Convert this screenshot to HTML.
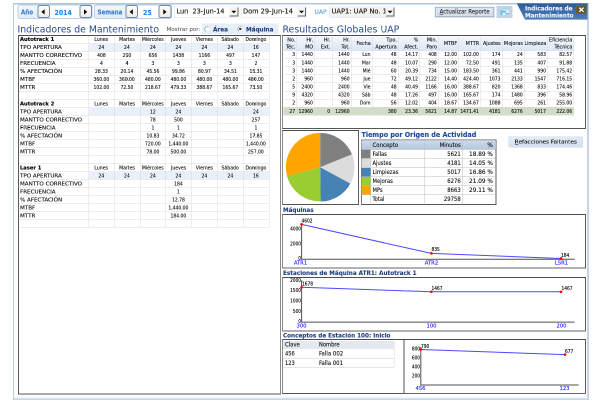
<!DOCTYPE html>
<html><head><meta charset="utf-8"><title>Indicadores de Mantenimiento</title>
<style>
html,body{margin:0;padding:0;background:#fff;width:600px;height:400px;overflow:hidden}
#r{position:absolute;left:0;top:0;width:1200px;height:800px;transform:scale(.5);transform-origin:0 0;font-family:'DejaVu Sans Condensed','DejaVu Sans','Liberation Sans',sans-serif;will-change:transform;-webkit-font-smoothing:antialiased;}
#r div{position:absolute;box-sizing:border-box}
#r svg{position:absolute;overflow:visible}
</style></head><body><div id="r">
<div  style="left:26.00px;top:6.40px;width:2.00px;height:794.00px;background:#b5cde5"></div>
<div  style="left:26.00px;top:6.40px;width:1152.00px;height:2.40px;background:#b0c6de"></div>
<div  style="left:28.00px;top:792.00px;width:1148.00px;height:8.00px;background:linear-gradient(#ffffff 0%,#eef4fa 55%,#c8d8e8 62%,#c8d8e8 100%)"></div>
<div  style="left:1174.00px;top:8.00px;width:4.40px;height:792.00px;background:#c6d4e3"></div>
<div  style="left:34.60px;top:8.60px;width:150.80px;height:29.80px;border:2px solid #bcd0e5;border-radius:5px;background:linear-gradient(#f2f7fc,#e4eef8)"></div>
<div  style="left:98.60px;top:10.60px;width:60.00px;height:25.80px;background:#fff"></div>
<div style="left:42.40px;top:16.40px;font-size:13.80px;line-height:17.25px;color:#3a7bd0;font-weight:bold;white-space:nowrap;-webkit-text-stroke:0.22px currentColor;transform:scaleX(0.890);transform-origin:0 0;">Año</div>
<div style="left:109.00px;top:17.20px;font-size:13.80px;line-height:17.25px;color:#2084ee;font-weight:bold;white-space:nowrap;-webkit-text-stroke:0.22px currentColor;">2014</div>
<div  style="left:74.80px;top:10.40px;width:25.20px;height:26.00px;border:2.4px solid #6c8aae;border-radius:4.5px;background:linear-gradient(#fdfcfa,#efece4)"></div>
<svg style="left:0;top:0" width="10" height="10"><polygon points="89.19999999999999,18.6 89.19999999999999,29.0 82.8,23.8" fill="#000"/></svg>
<div  style="left:158.80px;top:10.40px;width:25.20px;height:26.00px;border:2.4px solid #6c8aae;border-radius:4.5px;background:linear-gradient(#fdfcfa,#efece4)"></div>
<svg style="left:0;top:0" width="10" height="10"><polygon points="168.0,18.6 168.0,29.0 174.4,23.8" fill="#000"/></svg>
<div  style="left:188.40px;top:8.60px;width:155.20px;height:29.80px;border:2px solid #bcd0e5;border-radius:5px;background:linear-gradient(#f2f7fc,#e4eef8)"></div>
<div  style="left:275.00px;top:10.60px;width:42.20px;height:25.80px;background:#fff"></div>
<div style="left:195.40px;top:16.40px;font-size:13.80px;line-height:17.25px;color:#3a7bd0;font-weight:bold;white-space:nowrap;-webkit-text-stroke:0.22px currentColor;transform:scaleX(0.890);transform-origin:0 0;">Semana</div>
<div style="left:286.00px;top:17.20px;font-size:13.80px;line-height:17.25px;color:#2084ee;font-weight:bold;white-space:nowrap;-webkit-text-stroke:0.22px currentColor;">25</div>
<div  style="left:251.20px;top:10.40px;width:25.20px;height:26.00px;border:2.4px solid #6c8aae;border-radius:4.5px;background:linear-gradient(#fdfcfa,#efece4)"></div>
<svg style="left:0;top:0" width="10" height="10"><polygon points="265.6,18.6 265.6,29.0 259.2,23.8" fill="#000"/></svg>
<div  style="left:317.40px;top:10.40px;width:25.20px;height:26.00px;border:2.4px solid #6c8aae;border-radius:4.5px;background:linear-gradient(#fdfcfa,#efece4)"></div>
<svg style="left:0;top:0" width="10" height="10"><polygon points="326.59999999999997,18.6 326.59999999999997,29.0 333.0,23.8" fill="#000"/></svg>
<div  style="left:347.60px;top:13.20px;width:129.60px;height:22.40px;border:1px solid #dfe5ec;background:#fff"></div>
<div style="left:353.40px;top:15.18px;font-size:13.20px;line-height:16.50px;color:#111;font-weight:normal;white-space:nowrap;-webkit-text-stroke:0.22px currentColor;transform:scaleX(1.103);transform-origin:0 0;">Lun&nbsp; 23-Jun-14</div>
<div  style="left:458.40px;top:14.20px;width:18.20px;height:18.80px;border:2px solid #f8f8f5;border-right-color:#666;border-bottom-color:#666;background:#f5f4ef"></div>
<svg style="left:0;top:0" width="10" height="10"><polygon points="462.6,21.4 472.6,21.4 467.6,26.6" fill="#000"/></svg>
<div  style="left:481.60px;top:13.20px;width:131.20px;height:22.40px;border:1px solid #dfe5ec;background:#fff"></div>
<div style="left:486.40px;top:15.18px;font-size:13.20px;line-height:16.50px;color:#111;font-weight:normal;white-space:nowrap;-webkit-text-stroke:0.22px currentColor;transform:scaleX(1.113);transform-origin:0 0;">Dom 29-Jun-14</div>
<div  style="left:594.00px;top:14.20px;width:18.20px;height:18.80px;border:2px solid #f8f8f5;border-right-color:#666;border-bottom-color:#666;background:#f5f4ef"></div>
<svg style="left:0;top:0" width="10" height="10"><polygon points="598.2,21.4 608.2,21.4 603.2,26.6" fill="#000"/></svg>
<div style="left:629.40px;top:16.93px;font-size:11.40px;line-height:14.25px;color:#5596d6;font-weight:normal;white-space:nowrap;-webkit-text-stroke:0.1px currentColor;transform:scaleX(1.170);transform-origin:0 0;">UAP</div>
<div  style="left:658.00px;top:13.20px;width:131.20px;height:22.40px;border:1px solid #e3e6ea;background:#f3f3f1"></div>
<div style="left:662.80px;top:15.18px;font-size:13.20px;line-height:16.50px;color:#111;font-weight:normal;white-space:nowrap;-webkit-text-stroke:0.22px currentColor;transform:scaleX(1.130);transform-origin:0 0;">UAP1: UAP No. 1</div>
<div  style="left:770.80px;top:14.20px;width:18.20px;height:18.80px;border:2px solid #f8f8f5;border-right-color:#666;border-bottom-color:#666;background:#f5f4ef"></div>
<svg style="left:0;top:0" width="10" height="10"><polygon points="775.0,21.4 785.0,21.4 780.0,26.6" fill="#000"/></svg>
<div  style="left:869.20px;top:12.80px;width:120.40px;height:22.80px;background:#dce6f1;border-radius:1px"></div>
<div  style="left:871.20px;top:14.40px;width:116.40px;height:19.60px;border:1.5px solid #7f93aa;background:linear-gradient(#e0e8f2,#d3deeb)"></div>
<div style="left:871.20px;top:16.35px;font-size:12.20px;line-height:15.25px;color:#111;font-weight:normal;white-space:nowrap;-webkit-text-stroke:0.1px currentColor;width:116.40px;text-align:center;transform:scaleX(0.990);transform-origin:50% 0;"><u>A</u>ctualizar Reporte</div>
<div  style="left:992.60px;top:12.00px;width:32.60px;height:24.00px;background:#c4d3e4"></div>
<div  style="left:1006.40px;top:16.40px;width:11.20px;height:10.80px;background:linear-gradient(#9ad8f2 0%,#9ad8f2 25%,#e3ecf6 26%,#e3ecf6 100%);border-right:1.4px solid #7b8794;border-bottom:1.4px solid #7b8794"></div>
<div  style="left:1000.80px;top:20.80px;width:10.80px;height:9.60px;background:#5cc6ee"></div>
<div  style="left:1005.20px;top:24.80px;width:6.00px;height:5.00px;background:#eef3f8"></div>
<svg style="left:0;top:0" width="1200" height="60"><defs><linearGradient id="bg" x1="0" y1="0" x2="0" y2="1"><stop offset="0" stop-color="#2f5a9a"/><stop offset="1" stop-color="#4f7fba"/></linearGradient></defs><polygon points="1033.6,6.8 1175.2,6.8 1175.2,39.2 1050.0,39.2" fill="url(#bg)"/></svg>
<div style="left:1050.40px;top:9.75px;font-size:12.00px;line-height:15.00px;color:#eef3fc;font-weight:bold;white-space:nowrap;-webkit-text-stroke:0.22px currentColor;transform:scaleX(1.057);transform-origin:0 0;">Indicadores de</div>
<div style="left:1050.40px;top:23.75px;font-size:12.00px;line-height:15.00px;color:#eef3fc;font-weight:bold;white-space:nowrap;-webkit-text-stroke:0.22px currentColor;transform:scaleX(1.055);transform-origin:0 0;">Mantenimiento</div>
<div  style="left:1152.40px;top:11.20px;width:20.40px;height:16.40px;background:#5b5534;border:0.6px solid #77704a"></div>
<svg style="left:0;top:0" width="10" height="10"><path d="M1158.4 15.2 L1167.2 23.6 M1167.2 15.2 L1158.4 23.6" stroke="#fff" stroke-width="2.6" fill="none"/></svg>
<div style="left:35.20px;top:46.56px;font-size:19.40px;line-height:24.25px;color:#274b8f;font-weight:normal;white-space:nowrap;transform:scaleX(1.068);transform-origin:0 0;">Indicadores de Mantenimiento</div>
<div style="left:564.80px;top:46.76px;font-size:19.40px;line-height:24.25px;color:#274b8f;font-weight:normal;white-space:nowrap;transform:scaleX(1.076);transform-origin:0 0;">Resultados Globales UAP</div>
<div style="left:332.60px;top:51.92px;font-size:11.20px;line-height:14.00px;color:#505050;font-weight:normal;white-space:nowrap;-webkit-text-stroke:0.08px currentColor;transform:scaleX(1.096);transform-origin:0 0;">Mostrar por:</div>
<div  style="left:404.00px;top:46.80px;width:152.80px;height:21.00px;background:#e6eff9"></div>
<div  style="left:409.00px;top:52.60px;width:10.80px;height:10.80px;border:1.6px solid #707070;border-right-color:#e4e4e4;border-bottom-color:#e4e4e4;border-radius:50%;background:#fff;transform:rotate(-10deg)"></div>
<div style="left:426.40px;top:50.97px;font-size:12.80px;line-height:16.00px;color:#1f3f80;font-weight:bold;white-space:nowrap;-webkit-text-stroke:0.22px currentColor;transform:scaleX(0.994);transform-origin:0 0;">Área</div>
<div  style="left:475.20px;top:52.60px;width:10.80px;height:10.80px;border:1.6px solid #707070;border-right-color:#e4e4e4;border-bottom-color:#e4e4e4;border-radius:50%;background:#fff;transform:rotate(-10deg)"></div>
<div  style="left:478.40px;top:55.80px;width:4.40px;height:4.40px;border-radius:50%;background:#222"></div>
<div style="left:492.40px;top:50.97px;font-size:12.80px;line-height:16.00px;color:#1f3f80;font-weight:bold;white-space:nowrap;-webkit-text-stroke:0.22px currentColor;transform:scaleX(0.986);transform-origin:0 0;">Máquina</div>
<div  style="left:35.80px;top:70.00px;width:526.60px;height:718.60px;border-style:solid;border-width:2.0px;border-color:#4d4d4d #8a8a8a #555 #5a5a5a;background:#fff"></div>
<div style="left:40.00px;top:72.10px;font-size:10.30px;line-height:12.88px;color:#000;font-weight:bold;white-space:nowrap;-webkit-text-stroke:0.22px currentColor;transform:scaleX(1.120);transform-origin:0 0;">Autotrack 1</div>
<div style="left:176.60px;top:72.10px;font-size:10.30px;line-height:12.88px;color:#111;font-weight:normal;white-space:nowrap;-webkit-text-stroke:0.22px currentColor;width:51.58px;text-align:center;">Lunes</div>
<div style="left:228.18px;top:72.10px;font-size:10.30px;line-height:12.88px;color:#111;font-weight:normal;white-space:nowrap;-webkit-text-stroke:0.22px currentColor;width:51.58px;text-align:center;">Martes</div>
<div style="left:279.76px;top:72.10px;font-size:10.30px;line-height:12.88px;color:#111;font-weight:normal;white-space:nowrap;-webkit-text-stroke:0.22px currentColor;width:51.58px;text-align:center;">Miércoles</div>
<div style="left:331.34px;top:72.10px;font-size:10.30px;line-height:12.88px;color:#111;font-weight:normal;white-space:nowrap;-webkit-text-stroke:0.22px currentColor;width:51.58px;text-align:center;">Jueves</div>
<div style="left:382.92px;top:72.10px;font-size:10.30px;line-height:12.88px;color:#111;font-weight:normal;white-space:nowrap;-webkit-text-stroke:0.22px currentColor;width:51.58px;text-align:center;">Viernes</div>
<div style="left:434.50px;top:72.10px;font-size:10.30px;line-height:12.88px;color:#111;font-weight:normal;white-space:nowrap;-webkit-text-stroke:0.22px currentColor;width:51.58px;text-align:center;">Sábado</div>
<div style="left:486.08px;top:72.10px;font-size:10.30px;line-height:12.88px;color:#111;font-weight:normal;white-space:nowrap;-webkit-text-stroke:0.22px currentColor;width:51.58px;text-align:center;">Domingo</div>
<div  style="left:176.60px;top:86.50px;width:361.06px;height:15.80px;background:#e8f0fa"></div>
<div style="left:39.80px;top:88.10px;font-size:10.30px;line-height:12.88px;color:#111;font-weight:normal;white-space:nowrap;-webkit-text-stroke:0.22px currentColor;transform:scaleX(1.200);transform-origin:0 0;">TPO APERTURA</div>
<div style="left:176.60px;top:88.10px;font-size:10.30px;line-height:12.88px;color:#111;font-weight:normal;white-space:nowrap;-webkit-text-stroke:0.22px currentColor;width:51.58px;text-align:center;transform:scaleX(0.970);transform-origin:50% 0;">24</div>
<div style="left:228.18px;top:88.10px;font-size:10.30px;line-height:12.88px;color:#111;font-weight:normal;white-space:nowrap;-webkit-text-stroke:0.22px currentColor;width:51.58px;text-align:center;transform:scaleX(0.970);transform-origin:50% 0;">24</div>
<div style="left:279.76px;top:88.10px;font-size:10.30px;line-height:12.88px;color:#111;font-weight:normal;white-space:nowrap;-webkit-text-stroke:0.22px currentColor;width:51.58px;text-align:center;transform:scaleX(0.970);transform-origin:50% 0;">24</div>
<div style="left:331.34px;top:88.10px;font-size:10.30px;line-height:12.88px;color:#111;font-weight:normal;white-space:nowrap;-webkit-text-stroke:0.22px currentColor;width:51.58px;text-align:center;transform:scaleX(0.970);transform-origin:50% 0;">24</div>
<div style="left:382.92px;top:88.10px;font-size:10.30px;line-height:12.88px;color:#111;font-weight:normal;white-space:nowrap;-webkit-text-stroke:0.22px currentColor;width:51.58px;text-align:center;transform:scaleX(0.970);transform-origin:50% 0;">24</div>
<div style="left:434.50px;top:88.10px;font-size:10.30px;line-height:12.88px;color:#111;font-weight:normal;white-space:nowrap;-webkit-text-stroke:0.22px currentColor;width:51.58px;text-align:center;transform:scaleX(0.970);transform-origin:50% 0;">24</div>
<div style="left:486.08px;top:88.10px;font-size:10.30px;line-height:12.88px;color:#111;font-weight:normal;white-space:nowrap;-webkit-text-stroke:0.22px currentColor;width:51.58px;text-align:center;transform:scaleX(0.970);transform-origin:50% 0;">16</div>
<div style="left:39.80px;top:104.10px;font-size:10.30px;line-height:12.88px;color:#111;font-weight:normal;white-space:nowrap;-webkit-text-stroke:0.22px currentColor;transform:scaleX(1.200);transform-origin:0 0;">MANTTO CORRECTIVO</div>
<div style="left:176.60px;top:104.10px;font-size:10.30px;line-height:12.88px;color:#111;font-weight:normal;white-space:nowrap;-webkit-text-stroke:0.22px currentColor;width:51.58px;text-align:center;transform:scaleX(0.970);transform-origin:50% 0;">408</div>
<div style="left:228.18px;top:104.10px;font-size:10.30px;line-height:12.88px;color:#111;font-weight:normal;white-space:nowrap;-webkit-text-stroke:0.22px currentColor;width:51.58px;text-align:center;transform:scaleX(0.970);transform-origin:50% 0;">290</div>
<div style="left:279.76px;top:104.10px;font-size:10.30px;line-height:12.88px;color:#111;font-weight:normal;white-space:nowrap;-webkit-text-stroke:0.22px currentColor;width:51.58px;text-align:center;transform:scaleX(0.970);transform-origin:50% 0;">656</div>
<div style="left:331.34px;top:104.10px;font-size:10.30px;line-height:12.88px;color:#111;font-weight:normal;white-space:nowrap;-webkit-text-stroke:0.22px currentColor;width:51.58px;text-align:center;transform:scaleX(0.970);transform-origin:50% 0;">1438</div>
<div style="left:382.92px;top:104.10px;font-size:10.30px;line-height:12.88px;color:#111;font-weight:normal;white-space:nowrap;-webkit-text-stroke:0.22px currentColor;width:51.58px;text-align:center;transform:scaleX(0.970);transform-origin:50% 0;">1166</div>
<div style="left:434.50px;top:104.10px;font-size:10.30px;line-height:12.88px;color:#111;font-weight:normal;white-space:nowrap;-webkit-text-stroke:0.22px currentColor;width:51.58px;text-align:center;transform:scaleX(0.970);transform-origin:50% 0;">497</div>
<div style="left:486.08px;top:104.10px;font-size:10.30px;line-height:12.88px;color:#111;font-weight:normal;white-space:nowrap;-webkit-text-stroke:0.22px currentColor;width:51.58px;text-align:center;transform:scaleX(0.970);transform-origin:50% 0;">147</div>
<div style="left:39.80px;top:120.10px;font-size:10.30px;line-height:12.88px;color:#111;font-weight:normal;white-space:nowrap;-webkit-text-stroke:0.22px currentColor;transform:scaleX(1.200);transform-origin:0 0;">FRECUENCIA</div>
<div style="left:176.60px;top:120.10px;font-size:10.30px;line-height:12.88px;color:#111;font-weight:normal;white-space:nowrap;-webkit-text-stroke:0.22px currentColor;width:51.58px;text-align:center;transform:scaleX(0.970);transform-origin:50% 0;">4</div>
<div style="left:228.18px;top:120.10px;font-size:10.30px;line-height:12.88px;color:#111;font-weight:normal;white-space:nowrap;-webkit-text-stroke:0.22px currentColor;width:51.58px;text-align:center;transform:scaleX(0.970);transform-origin:50% 0;">4</div>
<div style="left:279.76px;top:120.10px;font-size:10.30px;line-height:12.88px;color:#111;font-weight:normal;white-space:nowrap;-webkit-text-stroke:0.22px currentColor;width:51.58px;text-align:center;transform:scaleX(0.970);transform-origin:50% 0;">3</div>
<div style="left:331.34px;top:120.10px;font-size:10.30px;line-height:12.88px;color:#111;font-weight:normal;white-space:nowrap;-webkit-text-stroke:0.22px currentColor;width:51.58px;text-align:center;transform:scaleX(0.970);transform-origin:50% 0;">3</div>
<div style="left:382.92px;top:120.10px;font-size:10.30px;line-height:12.88px;color:#111;font-weight:normal;white-space:nowrap;-webkit-text-stroke:0.22px currentColor;width:51.58px;text-align:center;transform:scaleX(0.970);transform-origin:50% 0;">3</div>
<div style="left:434.50px;top:120.10px;font-size:10.30px;line-height:12.88px;color:#111;font-weight:normal;white-space:nowrap;-webkit-text-stroke:0.22px currentColor;width:51.58px;text-align:center;transform:scaleX(0.970);transform-origin:50% 0;">3</div>
<div style="left:486.08px;top:120.10px;font-size:10.30px;line-height:12.88px;color:#111;font-weight:normal;white-space:nowrap;-webkit-text-stroke:0.22px currentColor;width:51.58px;text-align:center;transform:scaleX(0.970);transform-origin:50% 0;">2</div>
<div style="left:39.80px;top:136.10px;font-size:10.30px;line-height:12.88px;color:#111;font-weight:normal;white-space:nowrap;-webkit-text-stroke:0.22px currentColor;transform:scaleX(1.200);transform-origin:0 0;">% AFECTACIÓN</div>
<div style="left:176.60px;top:136.10px;font-size:10.30px;line-height:12.88px;color:#111;font-weight:normal;white-space:nowrap;-webkit-text-stroke:0.22px currentColor;width:51.58px;text-align:center;transform:scaleX(0.970);transform-origin:50% 0;">28.33</div>
<div style="left:228.18px;top:136.10px;font-size:10.30px;line-height:12.88px;color:#111;font-weight:normal;white-space:nowrap;-webkit-text-stroke:0.22px currentColor;width:51.58px;text-align:center;transform:scaleX(0.970);transform-origin:50% 0;">20.14</div>
<div style="left:279.76px;top:136.10px;font-size:10.30px;line-height:12.88px;color:#111;font-weight:normal;white-space:nowrap;-webkit-text-stroke:0.22px currentColor;width:51.58px;text-align:center;transform:scaleX(0.970);transform-origin:50% 0;">45.56</div>
<div style="left:331.34px;top:136.10px;font-size:10.30px;line-height:12.88px;color:#111;font-weight:normal;white-space:nowrap;-webkit-text-stroke:0.22px currentColor;width:51.58px;text-align:center;transform:scaleX(0.970);transform-origin:50% 0;">99.86</div>
<div style="left:382.92px;top:136.10px;font-size:10.30px;line-height:12.88px;color:#111;font-weight:normal;white-space:nowrap;-webkit-text-stroke:0.22px currentColor;width:51.58px;text-align:center;transform:scaleX(0.970);transform-origin:50% 0;">80.97</div>
<div style="left:434.50px;top:136.10px;font-size:10.30px;line-height:12.88px;color:#111;font-weight:normal;white-space:nowrap;-webkit-text-stroke:0.22px currentColor;width:51.58px;text-align:center;transform:scaleX(0.970);transform-origin:50% 0;">34.51</div>
<div style="left:486.08px;top:136.10px;font-size:10.30px;line-height:12.88px;color:#111;font-weight:normal;white-space:nowrap;-webkit-text-stroke:0.22px currentColor;width:51.58px;text-align:center;transform:scaleX(0.970);transform-origin:50% 0;">15.31</div>
<div style="left:39.80px;top:152.10px;font-size:10.30px;line-height:12.88px;color:#111;font-weight:normal;white-space:nowrap;-webkit-text-stroke:0.22px currentColor;transform:scaleX(1.200);transform-origin:0 0;">MTBF</div>
<div style="left:176.60px;top:152.10px;font-size:10.30px;line-height:12.88px;color:#111;font-weight:normal;white-space:nowrap;-webkit-text-stroke:0.22px currentColor;width:51.58px;text-align:center;transform:scaleX(0.970);transform-origin:50% 0;">360.00</div>
<div style="left:228.18px;top:152.10px;font-size:10.30px;line-height:12.88px;color:#111;font-weight:normal;white-space:nowrap;-webkit-text-stroke:0.22px currentColor;width:51.58px;text-align:center;transform:scaleX(0.970);transform-origin:50% 0;">360.00</div>
<div style="left:279.76px;top:152.10px;font-size:10.30px;line-height:12.88px;color:#111;font-weight:normal;white-space:nowrap;-webkit-text-stroke:0.22px currentColor;width:51.58px;text-align:center;transform:scaleX(0.970);transform-origin:50% 0;">480.00</div>
<div style="left:331.34px;top:152.10px;font-size:10.30px;line-height:12.88px;color:#111;font-weight:normal;white-space:nowrap;-webkit-text-stroke:0.22px currentColor;width:51.58px;text-align:center;transform:scaleX(0.970);transform-origin:50% 0;">480.00</div>
<div style="left:382.92px;top:152.10px;font-size:10.30px;line-height:12.88px;color:#111;font-weight:normal;white-space:nowrap;-webkit-text-stroke:0.22px currentColor;width:51.58px;text-align:center;transform:scaleX(0.970);transform-origin:50% 0;">480.00</div>
<div style="left:434.50px;top:152.10px;font-size:10.30px;line-height:12.88px;color:#111;font-weight:normal;white-space:nowrap;-webkit-text-stroke:0.22px currentColor;width:51.58px;text-align:center;transform:scaleX(0.970);transform-origin:50% 0;">480.00</div>
<div style="left:486.08px;top:152.10px;font-size:10.30px;line-height:12.88px;color:#111;font-weight:normal;white-space:nowrap;-webkit-text-stroke:0.22px currentColor;width:51.58px;text-align:center;transform:scaleX(0.970);transform-origin:50% 0;">480.00</div>
<div style="left:39.80px;top:168.10px;font-size:10.30px;line-height:12.88px;color:#111;font-weight:normal;white-space:nowrap;-webkit-text-stroke:0.22px currentColor;transform:scaleX(1.200);transform-origin:0 0;">MTTR</div>
<div style="left:176.60px;top:168.10px;font-size:10.30px;line-height:12.88px;color:#111;font-weight:normal;white-space:nowrap;-webkit-text-stroke:0.22px currentColor;width:51.58px;text-align:center;transform:scaleX(0.970);transform-origin:50% 0;">102.00</div>
<div style="left:228.18px;top:168.10px;font-size:10.30px;line-height:12.88px;color:#111;font-weight:normal;white-space:nowrap;-webkit-text-stroke:0.22px currentColor;width:51.58px;text-align:center;transform:scaleX(0.970);transform-origin:50% 0;">72.50</div>
<div style="left:279.76px;top:168.10px;font-size:10.30px;line-height:12.88px;color:#111;font-weight:normal;white-space:nowrap;-webkit-text-stroke:0.22px currentColor;width:51.58px;text-align:center;transform:scaleX(0.970);transform-origin:50% 0;">218.67</div>
<div style="left:331.34px;top:168.10px;font-size:10.30px;line-height:12.88px;color:#111;font-weight:normal;white-space:nowrap;-webkit-text-stroke:0.22px currentColor;width:51.58px;text-align:center;transform:scaleX(0.970);transform-origin:50% 0;">479.33</div>
<div style="left:382.92px;top:168.10px;font-size:10.30px;line-height:12.88px;color:#111;font-weight:normal;white-space:nowrap;-webkit-text-stroke:0.22px currentColor;width:51.58px;text-align:center;transform:scaleX(0.970);transform-origin:50% 0;">388.67</div>
<div style="left:434.50px;top:168.10px;font-size:10.30px;line-height:12.88px;color:#111;font-weight:normal;white-space:nowrap;-webkit-text-stroke:0.22px currentColor;width:51.58px;text-align:center;transform:scaleX(0.970);transform-origin:50% 0;">165.67</div>
<div style="left:486.08px;top:168.10px;font-size:10.30px;line-height:12.88px;color:#111;font-weight:normal;white-space:nowrap;-webkit-text-stroke:0.22px currentColor;width:51.58px;text-align:center;transform:scaleX(0.970);transform-origin:50% 0;">73.50</div>
<div style="left:40.00px;top:200.70px;font-size:10.30px;line-height:12.88px;color:#000;font-weight:bold;white-space:nowrap;-webkit-text-stroke:0.22px currentColor;transform:scaleX(1.120);transform-origin:0 0;">Autotrack 2</div>
<div style="left:176.60px;top:200.70px;font-size:10.30px;line-height:12.88px;color:#111;font-weight:normal;white-space:nowrap;-webkit-text-stroke:0.22px currentColor;width:51.58px;text-align:center;">Lunes</div>
<div style="left:228.18px;top:200.70px;font-size:10.30px;line-height:12.88px;color:#111;font-weight:normal;white-space:nowrap;-webkit-text-stroke:0.22px currentColor;width:51.58px;text-align:center;">Martes</div>
<div style="left:279.76px;top:200.70px;font-size:10.30px;line-height:12.88px;color:#111;font-weight:normal;white-space:nowrap;-webkit-text-stroke:0.22px currentColor;width:51.58px;text-align:center;">Miércoles</div>
<div style="left:331.34px;top:200.70px;font-size:10.30px;line-height:12.88px;color:#111;font-weight:normal;white-space:nowrap;-webkit-text-stroke:0.22px currentColor;width:51.58px;text-align:center;">Jueves</div>
<div style="left:382.92px;top:200.70px;font-size:10.30px;line-height:12.88px;color:#111;font-weight:normal;white-space:nowrap;-webkit-text-stroke:0.22px currentColor;width:51.58px;text-align:center;">Viernes</div>
<div style="left:434.50px;top:200.70px;font-size:10.30px;line-height:12.88px;color:#111;font-weight:normal;white-space:nowrap;-webkit-text-stroke:0.22px currentColor;width:51.58px;text-align:center;">Sábado</div>
<div style="left:486.08px;top:200.70px;font-size:10.30px;line-height:12.88px;color:#111;font-weight:normal;white-space:nowrap;-webkit-text-stroke:0.22px currentColor;width:51.58px;text-align:center;">Domingo</div>
<div  style="left:176.60px;top:214.50px;width:361.06px;height:15.80px;background:#e8f0fa"></div>
<div style="left:39.80px;top:216.70px;font-size:10.30px;line-height:12.88px;color:#111;font-weight:normal;white-space:nowrap;-webkit-text-stroke:0.22px currentColor;transform:scaleX(1.200);transform-origin:0 0;">TPO APERTURA</div>
<div style="left:279.76px;top:216.70px;font-size:10.30px;line-height:12.88px;color:#111;font-weight:normal;white-space:nowrap;-webkit-text-stroke:0.22px currentColor;width:51.58px;text-align:center;transform:scaleX(0.970);transform-origin:50% 0;">12</div>
<div style="left:331.34px;top:216.70px;font-size:10.30px;line-height:12.88px;color:#111;font-weight:normal;white-space:nowrap;-webkit-text-stroke:0.22px currentColor;width:51.58px;text-align:center;transform:scaleX(0.970);transform-origin:50% 0;">24</div>
<div style="left:486.08px;top:216.70px;font-size:10.30px;line-height:12.88px;color:#111;font-weight:normal;white-space:nowrap;-webkit-text-stroke:0.22px currentColor;width:51.58px;text-align:center;transform:scaleX(0.970);transform-origin:50% 0;">24</div>
<div style="left:39.80px;top:232.70px;font-size:10.30px;line-height:12.88px;color:#111;font-weight:normal;white-space:nowrap;-webkit-text-stroke:0.22px currentColor;transform:scaleX(1.200);transform-origin:0 0;">MANTTO CORRECTIVO</div>
<div style="left:279.76px;top:232.70px;font-size:10.30px;line-height:12.88px;color:#111;font-weight:normal;white-space:nowrap;-webkit-text-stroke:0.22px currentColor;width:51.58px;text-align:center;transform:scaleX(0.970);transform-origin:50% 0;">78</div>
<div style="left:331.34px;top:232.70px;font-size:10.30px;line-height:12.88px;color:#111;font-weight:normal;white-space:nowrap;-webkit-text-stroke:0.22px currentColor;width:51.58px;text-align:center;transform:scaleX(0.970);transform-origin:50% 0;">500</div>
<div style="left:486.08px;top:232.70px;font-size:10.30px;line-height:12.88px;color:#111;font-weight:normal;white-space:nowrap;-webkit-text-stroke:0.22px currentColor;width:51.58px;text-align:center;transform:scaleX(0.970);transform-origin:50% 0;">257</div>
<div style="left:39.80px;top:248.70px;font-size:10.30px;line-height:12.88px;color:#111;font-weight:normal;white-space:nowrap;-webkit-text-stroke:0.22px currentColor;transform:scaleX(1.200);transform-origin:0 0;">FRECUENCIA</div>
<div style="left:279.76px;top:248.70px;font-size:10.30px;line-height:12.88px;color:#111;font-weight:normal;white-space:nowrap;-webkit-text-stroke:0.22px currentColor;width:51.58px;text-align:center;transform:scaleX(0.970);transform-origin:50% 0;">1</div>
<div style="left:331.34px;top:248.70px;font-size:10.30px;line-height:12.88px;color:#111;font-weight:normal;white-space:nowrap;-webkit-text-stroke:0.22px currentColor;width:51.58px;text-align:center;transform:scaleX(0.970);transform-origin:50% 0;">1</div>
<div style="left:486.08px;top:248.70px;font-size:10.30px;line-height:12.88px;color:#111;font-weight:normal;white-space:nowrap;-webkit-text-stroke:0.22px currentColor;width:51.58px;text-align:center;transform:scaleX(0.970);transform-origin:50% 0;">1</div>
<div style="left:39.80px;top:264.70px;font-size:10.30px;line-height:12.88px;color:#111;font-weight:normal;white-space:nowrap;-webkit-text-stroke:0.22px currentColor;transform:scaleX(1.200);transform-origin:0 0;">% AFECTACIÓN</div>
<div style="left:279.76px;top:264.70px;font-size:10.30px;line-height:12.88px;color:#111;font-weight:normal;white-space:nowrap;-webkit-text-stroke:0.22px currentColor;width:51.58px;text-align:center;transform:scaleX(0.970);transform-origin:50% 0;">10.83</div>
<div style="left:331.34px;top:264.70px;font-size:10.30px;line-height:12.88px;color:#111;font-weight:normal;white-space:nowrap;-webkit-text-stroke:0.22px currentColor;width:51.58px;text-align:center;transform:scaleX(0.970);transform-origin:50% 0;">34.72</div>
<div style="left:486.08px;top:264.70px;font-size:10.30px;line-height:12.88px;color:#111;font-weight:normal;white-space:nowrap;-webkit-text-stroke:0.22px currentColor;width:51.58px;text-align:center;transform:scaleX(0.970);transform-origin:50% 0;">17.85</div>
<div style="left:39.80px;top:280.70px;font-size:10.30px;line-height:12.88px;color:#111;font-weight:normal;white-space:nowrap;-webkit-text-stroke:0.22px currentColor;transform:scaleX(1.200);transform-origin:0 0;">MTBF</div>
<div style="left:279.76px;top:280.70px;font-size:10.30px;line-height:12.88px;color:#111;font-weight:normal;white-space:nowrap;-webkit-text-stroke:0.22px currentColor;width:51.58px;text-align:center;transform:scaleX(0.970);transform-origin:50% 0;">720.00</div>
<div style="left:331.34px;top:280.70px;font-size:10.30px;line-height:12.88px;color:#111;font-weight:normal;white-space:nowrap;-webkit-text-stroke:0.22px currentColor;width:51.58px;text-align:center;transform:scaleX(0.970);transform-origin:50% 0;">1,440.00</div>
<div style="left:486.08px;top:280.70px;font-size:10.30px;line-height:12.88px;color:#111;font-weight:normal;white-space:nowrap;-webkit-text-stroke:0.22px currentColor;width:51.58px;text-align:center;transform:scaleX(0.970);transform-origin:50% 0;">1,440.00</div>
<div style="left:39.80px;top:296.70px;font-size:10.30px;line-height:12.88px;color:#111;font-weight:normal;white-space:nowrap;-webkit-text-stroke:0.22px currentColor;transform:scaleX(1.200);transform-origin:0 0;">MTTR</div>
<div style="left:279.76px;top:296.70px;font-size:10.30px;line-height:12.88px;color:#111;font-weight:normal;white-space:nowrap;-webkit-text-stroke:0.22px currentColor;width:51.58px;text-align:center;transform:scaleX(0.970);transform-origin:50% 0;">78.00</div>
<div style="left:331.34px;top:296.70px;font-size:10.30px;line-height:12.88px;color:#111;font-weight:normal;white-space:nowrap;-webkit-text-stroke:0.22px currentColor;width:51.58px;text-align:center;transform:scaleX(0.970);transform-origin:50% 0;">500.00</div>
<div style="left:486.08px;top:296.70px;font-size:10.30px;line-height:12.88px;color:#111;font-weight:normal;white-space:nowrap;-webkit-text-stroke:0.22px currentColor;width:51.58px;text-align:center;transform:scaleX(0.970);transform-origin:50% 0;">257.00</div>
<div style="left:40.00px;top:329.30px;font-size:10.30px;line-height:12.88px;color:#000;font-weight:bold;white-space:nowrap;-webkit-text-stroke:0.22px currentColor;transform:scaleX(1.120);transform-origin:0 0;">Laser 1</div>
<div style="left:176.60px;top:329.30px;font-size:10.30px;line-height:12.88px;color:#111;font-weight:normal;white-space:nowrap;-webkit-text-stroke:0.22px currentColor;width:51.58px;text-align:center;">Lunes</div>
<div style="left:228.18px;top:329.30px;font-size:10.30px;line-height:12.88px;color:#111;font-weight:normal;white-space:nowrap;-webkit-text-stroke:0.22px currentColor;width:51.58px;text-align:center;">Martes</div>
<div style="left:279.76px;top:329.30px;font-size:10.30px;line-height:12.88px;color:#111;font-weight:normal;white-space:nowrap;-webkit-text-stroke:0.22px currentColor;width:51.58px;text-align:center;">Miércoles</div>
<div style="left:331.34px;top:329.30px;font-size:10.30px;line-height:12.88px;color:#111;font-weight:normal;white-space:nowrap;-webkit-text-stroke:0.22px currentColor;width:51.58px;text-align:center;">Jueves</div>
<div style="left:382.92px;top:329.30px;font-size:10.30px;line-height:12.88px;color:#111;font-weight:normal;white-space:nowrap;-webkit-text-stroke:0.22px currentColor;width:51.58px;text-align:center;">Viernes</div>
<div style="left:434.50px;top:329.30px;font-size:10.30px;line-height:12.88px;color:#111;font-weight:normal;white-space:nowrap;-webkit-text-stroke:0.22px currentColor;width:51.58px;text-align:center;">Sábado</div>
<div style="left:486.08px;top:329.30px;font-size:10.30px;line-height:12.88px;color:#111;font-weight:normal;white-space:nowrap;-webkit-text-stroke:0.22px currentColor;width:51.58px;text-align:center;">Domingo</div>
<div  style="left:176.60px;top:342.50px;width:361.06px;height:15.80px;background:#e8f0fa"></div>
<div style="left:39.80px;top:345.30px;font-size:10.30px;line-height:12.88px;color:#111;font-weight:normal;white-space:nowrap;-webkit-text-stroke:0.22px currentColor;transform:scaleX(1.200);transform-origin:0 0;">TPO APERTURA</div>
<div style="left:176.60px;top:345.30px;font-size:10.30px;line-height:12.88px;color:#111;font-weight:normal;white-space:nowrap;-webkit-text-stroke:0.22px currentColor;width:51.58px;text-align:center;transform:scaleX(0.970);transform-origin:50% 0;">24</div>
<div style="left:228.18px;top:345.30px;font-size:10.30px;line-height:12.88px;color:#111;font-weight:normal;white-space:nowrap;-webkit-text-stroke:0.22px currentColor;width:51.58px;text-align:center;transform:scaleX(0.970);transform-origin:50% 0;">24</div>
<div style="left:279.76px;top:345.30px;font-size:10.30px;line-height:12.88px;color:#111;font-weight:normal;white-space:nowrap;-webkit-text-stroke:0.22px currentColor;width:51.58px;text-align:center;transform:scaleX(0.970);transform-origin:50% 0;">24</div>
<div style="left:331.34px;top:345.30px;font-size:10.30px;line-height:12.88px;color:#111;font-weight:normal;white-space:nowrap;-webkit-text-stroke:0.22px currentColor;width:51.58px;text-align:center;transform:scaleX(0.970);transform-origin:50% 0;">24</div>
<div style="left:382.92px;top:345.30px;font-size:10.30px;line-height:12.88px;color:#111;font-weight:normal;white-space:nowrap;-webkit-text-stroke:0.22px currentColor;width:51.58px;text-align:center;transform:scaleX(0.970);transform-origin:50% 0;">24</div>
<div style="left:434.50px;top:345.30px;font-size:10.30px;line-height:12.88px;color:#111;font-weight:normal;white-space:nowrap;-webkit-text-stroke:0.22px currentColor;width:51.58px;text-align:center;transform:scaleX(0.970);transform-origin:50% 0;">24</div>
<div style="left:486.08px;top:345.30px;font-size:10.30px;line-height:12.88px;color:#111;font-weight:normal;white-space:nowrap;-webkit-text-stroke:0.22px currentColor;width:51.58px;text-align:center;transform:scaleX(0.970);transform-origin:50% 0;">16</div>
<div style="left:39.80px;top:361.30px;font-size:10.30px;line-height:12.88px;color:#111;font-weight:normal;white-space:nowrap;-webkit-text-stroke:0.22px currentColor;transform:scaleX(1.200);transform-origin:0 0;">MANTTO CORRECTIVO</div>
<div style="left:331.34px;top:361.30px;font-size:10.30px;line-height:12.88px;color:#111;font-weight:normal;white-space:nowrap;-webkit-text-stroke:0.22px currentColor;width:51.58px;text-align:center;transform:scaleX(0.970);transform-origin:50% 0;">184</div>
<div style="left:39.80px;top:377.30px;font-size:10.30px;line-height:12.88px;color:#111;font-weight:normal;white-space:nowrap;-webkit-text-stroke:0.22px currentColor;transform:scaleX(1.200);transform-origin:0 0;">FRECUENCIA</div>
<div style="left:331.34px;top:377.30px;font-size:10.30px;line-height:12.88px;color:#111;font-weight:normal;white-space:nowrap;-webkit-text-stroke:0.22px currentColor;width:51.58px;text-align:center;transform:scaleX(0.970);transform-origin:50% 0;">1</div>
<div style="left:39.80px;top:393.30px;font-size:10.30px;line-height:12.88px;color:#111;font-weight:normal;white-space:nowrap;-webkit-text-stroke:0.22px currentColor;transform:scaleX(1.200);transform-origin:0 0;">% AFECTACIÓN</div>
<div style="left:331.34px;top:393.30px;font-size:10.30px;line-height:12.88px;color:#111;font-weight:normal;white-space:nowrap;-webkit-text-stroke:0.22px currentColor;width:51.58px;text-align:center;transform:scaleX(0.970);transform-origin:50% 0;">12.78</div>
<div style="left:39.80px;top:409.30px;font-size:10.30px;line-height:12.88px;color:#111;font-weight:normal;white-space:nowrap;-webkit-text-stroke:0.22px currentColor;transform:scaleX(1.200);transform-origin:0 0;">MTBF</div>
<div style="left:331.34px;top:409.30px;font-size:10.30px;line-height:12.88px;color:#111;font-weight:normal;white-space:nowrap;-webkit-text-stroke:0.22px currentColor;width:51.58px;text-align:center;transform:scaleX(0.970);transform-origin:50% 0;">1,440.00</div>
<div style="left:39.80px;top:425.30px;font-size:10.30px;line-height:12.88px;color:#111;font-weight:normal;white-space:nowrap;-webkit-text-stroke:0.22px currentColor;transform:scaleX(1.200);transform-origin:0 0;">MTTR</div>
<div style="left:331.34px;top:425.30px;font-size:10.30px;line-height:12.88px;color:#111;font-weight:normal;white-space:nowrap;-webkit-text-stroke:0.22px currentColor;width:51.58px;text-align:center;transform:scaleX(0.970);transform-origin:50% 0;">184.00</div>
<div style="left:37.60px;top:86.50px;width:500.66px;height:1.00px;background:#dcdcdc"></div>
<div style="left:37.60px;top:102.50px;width:500.66px;height:1.00px;background:#dcdcdc"></div>
<div style="left:37.60px;top:118.50px;width:500.66px;height:1.00px;background:#dcdcdc"></div>
<div style="left:37.60px;top:134.50px;width:500.66px;height:1.00px;background:#dcdcdc"></div>
<div style="left:37.60px;top:150.50px;width:500.66px;height:1.00px;background:#dcdcdc"></div>
<div style="left:37.60px;top:166.50px;width:500.66px;height:1.00px;background:#dcdcdc"></div>
<div style="left:37.60px;top:182.50px;width:500.66px;height:1.00px;background:#dcdcdc"></div>
<div style="left:37.60px;top:198.50px;width:500.66px;height:1.00px;background:#dcdcdc"></div>
<div style="left:37.60px;top:214.50px;width:500.66px;height:1.00px;background:#dcdcdc"></div>
<div style="left:37.60px;top:230.50px;width:500.66px;height:1.00px;background:#dcdcdc"></div>
<div style="left:37.60px;top:246.50px;width:500.66px;height:1.00px;background:#dcdcdc"></div>
<div style="left:37.60px;top:262.50px;width:500.66px;height:1.00px;background:#dcdcdc"></div>
<div style="left:37.60px;top:278.50px;width:500.66px;height:1.00px;background:#dcdcdc"></div>
<div style="left:37.60px;top:294.50px;width:500.66px;height:1.00px;background:#dcdcdc"></div>
<div style="left:37.60px;top:310.50px;width:500.66px;height:1.00px;background:#dcdcdc"></div>
<div style="left:37.60px;top:326.50px;width:500.66px;height:1.00px;background:#dcdcdc"></div>
<div style="left:37.60px;top:342.50px;width:500.66px;height:1.00px;background:#dcdcdc"></div>
<div style="left:37.60px;top:358.50px;width:500.66px;height:1.00px;background:#dcdcdc"></div>
<div style="left:37.60px;top:374.50px;width:500.66px;height:1.00px;background:#dcdcdc"></div>
<div style="left:37.60px;top:390.50px;width:500.66px;height:1.00px;background:#dcdcdc"></div>
<div style="left:37.60px;top:406.50px;width:500.66px;height:1.00px;background:#dcdcdc"></div>
<div style="left:37.60px;top:422.50px;width:500.66px;height:1.00px;background:#dcdcdc"></div>
<div style="left:37.60px;top:438.50px;width:500.66px;height:1.00px;background:#dcdcdc"></div>
<div style="left:37.60px;top:454.50px;width:500.66px;height:1.00px;background:#dcdcdc"></div>
<div style="left:176.60px;top:72.80px;width:1.00px;height:381.70px;background:#dcdcdc"></div>
<div style="left:228.18px;top:72.80px;width:1.00px;height:381.70px;background:#dcdcdc"></div>
<div style="left:279.76px;top:72.80px;width:1.00px;height:381.70px;background:#dcdcdc"></div>
<div style="left:331.34px;top:72.80px;width:1.00px;height:381.70px;background:#dcdcdc"></div>
<div style="left:382.92px;top:72.80px;width:1.00px;height:381.70px;background:#dcdcdc"></div>
<div style="left:434.50px;top:72.80px;width:1.00px;height:381.70px;background:#dcdcdc"></div>
<div style="left:486.08px;top:72.80px;width:1.00px;height:381.70px;background:#dcdcdc"></div>
<div style="left:537.66px;top:72.80px;width:1.00px;height:381.70px;background:#dcdcdc"></div>
<div  style="left:564.00px;top:70.00px;width:607.80px;height:187.50px;border-style:solid;border-width:2.0px;border-color:#4d4d4d #5a5a5a #555 #8a8a8a;background:#fff"></div>
<div  style="left:566.80px;top:72.80px;width:580.40px;height:27.80px;background:linear-gradient(#f3f7fc,#dde8f6)"></div>
<div style="left:566.80px;top:72.80px;font-size:10.30px;line-height:12.88px;color:#111;font-weight:normal;white-space:nowrap;-webkit-text-stroke:0.22px currentColor;width:23.60px;text-align:right;transform:scaleX(1.050);transform-origin:100% 0;">No.</div>
<div style="left:566.80px;top:86.60px;font-size:10.30px;line-height:12.88px;color:#111;font-weight:normal;white-space:nowrap;-webkit-text-stroke:0.22px currentColor;width:23.60px;text-align:right;transform:scaleX(1.050);transform-origin:100% 0;">Téc.</div>
<div style="left:593.20px;top:72.80px;font-size:10.30px;line-height:12.88px;color:#111;font-weight:normal;white-space:nowrap;-webkit-text-stroke:0.22px currentColor;width:33.20px;text-align:right;transform:scaleX(1.050);transform-origin:100% 0;">Hr.</div>
<div style="left:593.20px;top:86.60px;font-size:10.30px;line-height:12.88px;color:#111;font-weight:normal;white-space:nowrap;-webkit-text-stroke:0.22px currentColor;width:33.20px;text-align:right;transform:scaleX(1.050);transform-origin:100% 0;">MO</div>
<div style="left:629.20px;top:72.80px;font-size:10.30px;line-height:12.88px;color:#111;font-weight:normal;white-space:nowrap;-webkit-text-stroke:0.22px currentColor;width:31.60px;text-align:right;transform:scaleX(1.050);transform-origin:100% 0;">Hr.</div>
<div style="left:629.20px;top:86.60px;font-size:10.30px;line-height:12.88px;color:#111;font-weight:normal;white-space:nowrap;-webkit-text-stroke:0.22px currentColor;width:31.60px;text-align:right;transform:scaleX(1.050);transform-origin:100% 0;">Ext.</div>
<div style="left:663.60px;top:72.80px;font-size:10.30px;line-height:12.88px;color:#111;font-weight:normal;white-space:nowrap;-webkit-text-stroke:0.22px currentColor;width:35.60px;text-align:right;transform:scaleX(1.050);transform-origin:100% 0;">Hr.</div>
<div style="left:663.60px;top:86.60px;font-size:10.30px;line-height:12.88px;color:#111;font-weight:normal;white-space:nowrap;-webkit-text-stroke:0.22px currentColor;width:35.60px;text-align:right;transform:scaleX(1.050);transform-origin:100% 0;">Tot.</div>
<div style="left:702.00px;top:80.40px;font-size:10.30px;line-height:12.88px;color:#111;font-weight:normal;white-space:nowrap;-webkit-text-stroke:0.22px currentColor;width:39.40px;text-align:right;transform:scaleX(1.050);transform-origin:100% 0;">Fecha</div>
<div style="left:744.20px;top:72.80px;font-size:10.30px;line-height:12.88px;color:#111;font-weight:normal;white-space:nowrap;-webkit-text-stroke:0.22px currentColor;width:49.60px;text-align:right;transform:scaleX(1.050);transform-origin:100% 0;">Tpo.</div>
<div style="left:744.20px;top:86.60px;font-size:10.30px;line-height:12.88px;color:#111;font-weight:normal;white-space:nowrap;-webkit-text-stroke:0.22px currentColor;width:49.60px;text-align:right;transform:scaleX(1.050);transform-origin:100% 0;">Apertura</div>
<div style="left:796.60px;top:72.80px;font-size:10.30px;line-height:12.88px;color:#111;font-weight:normal;white-space:nowrap;-webkit-text-stroke:0.22px currentColor;width:39.40px;text-align:right;transform:scaleX(1.050);transform-origin:100% 0;">%</div>
<div style="left:796.60px;top:86.60px;font-size:10.30px;line-height:12.88px;color:#111;font-weight:normal;white-space:nowrap;-webkit-text-stroke:0.22px currentColor;width:39.40px;text-align:right;transform:scaleX(1.050);transform-origin:100% 0;">Afect.</div>
<div style="left:838.80px;top:72.80px;font-size:10.30px;line-height:12.88px;color:#111;font-weight:normal;white-space:nowrap;-webkit-text-stroke:0.22px currentColor;width:35.00px;text-align:right;transform:scaleX(1.050);transform-origin:100% 0;">Min.</div>
<div style="left:838.80px;top:86.60px;font-size:10.30px;line-height:12.88px;color:#111;font-weight:normal;white-space:nowrap;-webkit-text-stroke:0.22px currentColor;width:35.00px;text-align:right;transform:scaleX(1.050);transform-origin:100% 0;">Paro</div>
<div style="left:876.60px;top:80.40px;font-size:10.30px;line-height:12.88px;color:#111;font-weight:normal;white-space:nowrap;-webkit-text-stroke:0.22px currentColor;width:37.40px;text-align:right;transform:scaleX(1.050);transform-origin:100% 0;">MTBF</div>
<div style="left:916.80px;top:80.40px;font-size:10.30px;line-height:12.88px;color:#111;font-weight:normal;white-space:nowrap;-webkit-text-stroke:0.22px currentColor;width:41.20px;text-align:right;transform:scaleX(1.050);transform-origin:100% 0;">MTTR</div>
<div style="left:960.80px;top:80.40px;font-size:10.30px;line-height:12.88px;color:#111;font-weight:normal;white-space:nowrap;-webkit-text-stroke:0.22px currentColor;width:40.40px;text-align:right;transform:scaleX(1.050);transform-origin:100% 0;">Ajustes</div>
<div style="left:1004.00px;top:80.40px;font-size:10.30px;line-height:12.88px;color:#111;font-weight:normal;white-space:nowrap;-webkit-text-stroke:0.22px currentColor;width:41.80px;text-align:right;transform:scaleX(1.050);transform-origin:100% 0;">Mejoras</div>
<div style="left:1048.60px;top:80.40px;font-size:10.30px;line-height:12.88px;color:#111;font-weight:normal;white-space:nowrap;-webkit-text-stroke:0.22px currentColor;width:43.40px;text-align:right;transform:scaleX(1.050);transform-origin:100% 0;">Limpieza</div>
<div style="left:1094.80px;top:72.80px;font-size:10.30px;line-height:12.88px;color:#111;font-weight:normal;white-space:nowrap;-webkit-text-stroke:0.22px currentColor;width:49.60px;text-align:right;transform:scaleX(1.050);transform-origin:100% 0;">Eficiencia</div>
<div style="left:1094.80px;top:86.60px;font-size:10.30px;line-height:12.88px;color:#111;font-weight:normal;white-space:nowrap;-webkit-text-stroke:0.22px currentColor;width:49.60px;text-align:right;transform:scaleX(1.050);transform-origin:100% 0;">Técnica</div>
<div  style="left:566.80px;top:213.66px;width:580.40px;height:16.18px;background:#d2dcc7"></div>
<div style="left:566.80px;top:102.40px;font-size:10.30px;line-height:12.88px;color:#111;font-weight:normal;white-space:nowrap;-webkit-text-stroke:0.22px currentColor;width:23.20px;text-align:right;transform:scaleX(0.970);transform-origin:100% 0;">3</div>
<div style="left:593.20px;top:102.40px;font-size:10.30px;line-height:12.88px;color:#111;font-weight:normal;white-space:nowrap;-webkit-text-stroke:0.22px currentColor;width:32.80px;text-align:right;transform:scaleX(0.970);transform-origin:100% 0;">1440</div>
<div style="left:663.60px;top:102.40px;font-size:10.30px;line-height:12.88px;color:#111;font-weight:normal;white-space:nowrap;-webkit-text-stroke:0.22px currentColor;width:35.20px;text-align:right;transform:scaleX(0.970);transform-origin:100% 0;">1440</div>
<div style="left:702.00px;top:102.40px;font-size:10.30px;line-height:12.88px;color:#111;font-weight:normal;white-space:nowrap;-webkit-text-stroke:0.22px currentColor;width:39.00px;text-align:right;transform:scaleX(0.970);transform-origin:100% 0;">Lun</div>
<div style="left:744.20px;top:102.40px;font-size:10.30px;line-height:12.88px;color:#111;font-weight:normal;white-space:nowrap;-webkit-text-stroke:0.22px currentColor;width:49.20px;text-align:right;transform:scaleX(0.970);transform-origin:100% 0;">48</div>
<div style="left:796.60px;top:102.40px;font-size:10.30px;line-height:12.88px;color:#111;font-weight:normal;white-space:nowrap;-webkit-text-stroke:0.22px currentColor;width:39.00px;text-align:right;transform:scaleX(0.970);transform-origin:100% 0;">14.17</div>
<div style="left:838.80px;top:102.40px;font-size:10.30px;line-height:12.88px;color:#111;font-weight:normal;white-space:nowrap;-webkit-text-stroke:0.22px currentColor;width:34.60px;text-align:right;transform:scaleX(0.970);transform-origin:100% 0;">408</div>
<div style="left:876.60px;top:102.40px;font-size:10.30px;line-height:12.88px;color:#111;font-weight:normal;white-space:nowrap;-webkit-text-stroke:0.22px currentColor;width:37.00px;text-align:right;transform:scaleX(0.970);transform-origin:100% 0;">12.00</div>
<div style="left:916.80px;top:102.40px;font-size:10.30px;line-height:12.88px;color:#111;font-weight:normal;white-space:nowrap;-webkit-text-stroke:0.22px currentColor;width:40.80px;text-align:right;transform:scaleX(0.970);transform-origin:100% 0;">102.00</div>
<div style="left:960.80px;top:102.40px;font-size:10.30px;line-height:12.88px;color:#111;font-weight:normal;white-space:nowrap;-webkit-text-stroke:0.22px currentColor;width:40.00px;text-align:right;transform:scaleX(0.970);transform-origin:100% 0;">174</div>
<div style="left:1004.00px;top:102.40px;font-size:10.30px;line-height:12.88px;color:#111;font-weight:normal;white-space:nowrap;-webkit-text-stroke:0.22px currentColor;width:41.40px;text-align:right;transform:scaleX(0.970);transform-origin:100% 0;">24</div>
<div style="left:1048.60px;top:102.40px;font-size:10.30px;line-height:12.88px;color:#111;font-weight:normal;white-space:nowrap;-webkit-text-stroke:0.22px currentColor;width:43.00px;text-align:right;transform:scaleX(0.970);transform-origin:100% 0;">583</div>
<div style="left:1094.80px;top:102.40px;font-size:10.30px;line-height:12.88px;color:#111;font-weight:normal;white-space:nowrap;-webkit-text-stroke:0.22px currentColor;width:49.20px;text-align:right;transform:scaleX(0.970);transform-origin:100% 0;">82.57</div>
<div style="left:566.80px;top:118.58px;font-size:10.30px;line-height:12.88px;color:#111;font-weight:normal;white-space:nowrap;-webkit-text-stroke:0.22px currentColor;width:23.20px;text-align:right;transform:scaleX(0.970);transform-origin:100% 0;">3</div>
<div style="left:593.20px;top:118.58px;font-size:10.30px;line-height:12.88px;color:#111;font-weight:normal;white-space:nowrap;-webkit-text-stroke:0.22px currentColor;width:32.80px;text-align:right;transform:scaleX(0.970);transform-origin:100% 0;">1440</div>
<div style="left:663.60px;top:118.58px;font-size:10.30px;line-height:12.88px;color:#111;font-weight:normal;white-space:nowrap;-webkit-text-stroke:0.22px currentColor;width:35.20px;text-align:right;transform:scaleX(0.970);transform-origin:100% 0;">1440</div>
<div style="left:702.00px;top:118.58px;font-size:10.30px;line-height:12.88px;color:#111;font-weight:normal;white-space:nowrap;-webkit-text-stroke:0.22px currentColor;width:39.00px;text-align:right;transform:scaleX(0.970);transform-origin:100% 0;">Mar</div>
<div style="left:744.20px;top:118.58px;font-size:10.30px;line-height:12.88px;color:#111;font-weight:normal;white-space:nowrap;-webkit-text-stroke:0.22px currentColor;width:49.20px;text-align:right;transform:scaleX(0.970);transform-origin:100% 0;">48</div>
<div style="left:796.60px;top:118.58px;font-size:10.30px;line-height:12.88px;color:#111;font-weight:normal;white-space:nowrap;-webkit-text-stroke:0.22px currentColor;width:39.00px;text-align:right;transform:scaleX(0.970);transform-origin:100% 0;">10.07</div>
<div style="left:838.80px;top:118.58px;font-size:10.30px;line-height:12.88px;color:#111;font-weight:normal;white-space:nowrap;-webkit-text-stroke:0.22px currentColor;width:34.60px;text-align:right;transform:scaleX(0.970);transform-origin:100% 0;">290</div>
<div style="left:876.60px;top:118.58px;font-size:10.30px;line-height:12.88px;color:#111;font-weight:normal;white-space:nowrap;-webkit-text-stroke:0.22px currentColor;width:37.00px;text-align:right;transform:scaleX(0.970);transform-origin:100% 0;">12.00</div>
<div style="left:916.80px;top:118.58px;font-size:10.30px;line-height:12.88px;color:#111;font-weight:normal;white-space:nowrap;-webkit-text-stroke:0.22px currentColor;width:40.80px;text-align:right;transform:scaleX(0.970);transform-origin:100% 0;">72.50</div>
<div style="left:960.80px;top:118.58px;font-size:10.30px;line-height:12.88px;color:#111;font-weight:normal;white-space:nowrap;-webkit-text-stroke:0.22px currentColor;width:40.00px;text-align:right;transform:scaleX(0.970);transform-origin:100% 0;">491</div>
<div style="left:1004.00px;top:118.58px;font-size:10.30px;line-height:12.88px;color:#111;font-weight:normal;white-space:nowrap;-webkit-text-stroke:0.22px currentColor;width:41.40px;text-align:right;transform:scaleX(0.970);transform-origin:100% 0;">135</div>
<div style="left:1048.60px;top:118.58px;font-size:10.30px;line-height:12.88px;color:#111;font-weight:normal;white-space:nowrap;-webkit-text-stroke:0.22px currentColor;width:43.00px;text-align:right;transform:scaleX(0.970);transform-origin:100% 0;">407</div>
<div style="left:1094.80px;top:118.58px;font-size:10.30px;line-height:12.88px;color:#111;font-weight:normal;white-space:nowrap;-webkit-text-stroke:0.22px currentColor;width:49.20px;text-align:right;transform:scaleX(0.970);transform-origin:100% 0;">91.88</div>
<div style="left:566.80px;top:134.76px;font-size:10.30px;line-height:12.88px;color:#111;font-weight:normal;white-space:nowrap;-webkit-text-stroke:0.22px currentColor;width:23.20px;text-align:right;transform:scaleX(0.970);transform-origin:100% 0;">3</div>
<div style="left:593.20px;top:134.76px;font-size:10.30px;line-height:12.88px;color:#111;font-weight:normal;white-space:nowrap;-webkit-text-stroke:0.22px currentColor;width:32.80px;text-align:right;transform:scaleX(0.970);transform-origin:100% 0;">1440</div>
<div style="left:663.60px;top:134.76px;font-size:10.30px;line-height:12.88px;color:#111;font-weight:normal;white-space:nowrap;-webkit-text-stroke:0.22px currentColor;width:35.20px;text-align:right;transform:scaleX(0.970);transform-origin:100% 0;">1440</div>
<div style="left:702.00px;top:134.76px;font-size:10.30px;line-height:12.88px;color:#111;font-weight:normal;white-space:nowrap;-webkit-text-stroke:0.22px currentColor;width:39.00px;text-align:right;transform:scaleX(0.970);transform-origin:100% 0;">Mié</div>
<div style="left:744.20px;top:134.76px;font-size:10.30px;line-height:12.88px;color:#111;font-weight:normal;white-space:nowrap;-webkit-text-stroke:0.22px currentColor;width:49.20px;text-align:right;transform:scaleX(0.970);transform-origin:100% 0;">60</div>
<div style="left:796.60px;top:134.76px;font-size:10.30px;line-height:12.88px;color:#111;font-weight:normal;white-space:nowrap;-webkit-text-stroke:0.22px currentColor;width:39.00px;text-align:right;transform:scaleX(0.970);transform-origin:100% 0;">20.39</div>
<div style="left:838.80px;top:134.76px;font-size:10.30px;line-height:12.88px;color:#111;font-weight:normal;white-space:nowrap;-webkit-text-stroke:0.22px currentColor;width:34.60px;text-align:right;transform:scaleX(0.970);transform-origin:100% 0;">734</div>
<div style="left:876.60px;top:134.76px;font-size:10.30px;line-height:12.88px;color:#111;font-weight:normal;white-space:nowrap;-webkit-text-stroke:0.22px currentColor;width:37.00px;text-align:right;transform:scaleX(0.970);transform-origin:100% 0;">15.00</div>
<div style="left:916.80px;top:134.76px;font-size:10.30px;line-height:12.88px;color:#111;font-weight:normal;white-space:nowrap;-webkit-text-stroke:0.22px currentColor;width:40.80px;text-align:right;transform:scaleX(0.970);transform-origin:100% 0;">183.50</div>
<div style="left:960.80px;top:134.76px;font-size:10.30px;line-height:12.88px;color:#111;font-weight:normal;white-space:nowrap;-webkit-text-stroke:0.22px currentColor;width:40.00px;text-align:right;transform:scaleX(0.970);transform-origin:100% 0;">361</div>
<div style="left:1004.00px;top:134.76px;font-size:10.30px;line-height:12.88px;color:#111;font-weight:normal;white-space:nowrap;-webkit-text-stroke:0.22px currentColor;width:41.40px;text-align:right;transform:scaleX(0.970);transform-origin:100% 0;">441</div>
<div style="left:1048.60px;top:134.76px;font-size:10.30px;line-height:12.88px;color:#111;font-weight:normal;white-space:nowrap;-webkit-text-stroke:0.22px currentColor;width:43.00px;text-align:right;transform:scaleX(0.970);transform-origin:100% 0;">990</div>
<div style="left:1094.80px;top:134.76px;font-size:10.30px;line-height:12.88px;color:#111;font-weight:normal;white-space:nowrap;-webkit-text-stroke:0.22px currentColor;width:49.20px;text-align:right;transform:scaleX(0.970);transform-origin:100% 0;">175.42</div>
<div style="left:566.80px;top:150.94px;font-size:10.30px;line-height:12.88px;color:#111;font-weight:normal;white-space:nowrap;-webkit-text-stroke:0.22px currentColor;width:23.20px;text-align:right;transform:scaleX(0.970);transform-origin:100% 0;">2</div>
<div style="left:593.20px;top:150.94px;font-size:10.30px;line-height:12.88px;color:#111;font-weight:normal;white-space:nowrap;-webkit-text-stroke:0.22px currentColor;width:32.80px;text-align:right;transform:scaleX(0.970);transform-origin:100% 0;">960</div>
<div style="left:663.60px;top:150.94px;font-size:10.30px;line-height:12.88px;color:#111;font-weight:normal;white-space:nowrap;-webkit-text-stroke:0.22px currentColor;width:35.20px;text-align:right;transform:scaleX(0.970);transform-origin:100% 0;">960</div>
<div style="left:702.00px;top:150.94px;font-size:10.30px;line-height:12.88px;color:#111;font-weight:normal;white-space:nowrap;-webkit-text-stroke:0.22px currentColor;width:39.00px;text-align:right;transform:scaleX(0.970);transform-origin:100% 0;">Jue</div>
<div style="left:744.20px;top:150.94px;font-size:10.30px;line-height:12.88px;color:#111;font-weight:normal;white-space:nowrap;-webkit-text-stroke:0.22px currentColor;width:49.20px;text-align:right;transform:scaleX(0.970);transform-origin:100% 0;">72</div>
<div style="left:796.60px;top:150.94px;font-size:10.30px;line-height:12.88px;color:#111;font-weight:normal;white-space:nowrap;-webkit-text-stroke:0.22px currentColor;width:39.00px;text-align:right;transform:scaleX(0.970);transform-origin:100% 0;">49.12</div>
<div style="left:838.80px;top:150.94px;font-size:10.30px;line-height:12.88px;color:#111;font-weight:normal;white-space:nowrap;-webkit-text-stroke:0.22px currentColor;width:34.60px;text-align:right;transform:scaleX(0.970);transform-origin:100% 0;">2122</div>
<div style="left:876.60px;top:150.94px;font-size:10.30px;line-height:12.88px;color:#111;font-weight:normal;white-space:nowrap;-webkit-text-stroke:0.22px currentColor;width:37.00px;text-align:right;transform:scaleX(0.970);transform-origin:100% 0;">14.40</div>
<div style="left:916.80px;top:150.94px;font-size:10.30px;line-height:12.88px;color:#111;font-weight:normal;white-space:nowrap;-webkit-text-stroke:0.22px currentColor;width:40.80px;text-align:right;transform:scaleX(0.970);transform-origin:100% 0;">424.40</div>
<div style="left:960.80px;top:150.94px;font-size:10.30px;line-height:12.88px;color:#111;font-weight:normal;white-space:nowrap;-webkit-text-stroke:0.22px currentColor;width:40.00px;text-align:right;transform:scaleX(0.970);transform-origin:100% 0;">1073</div>
<div style="left:1004.00px;top:150.94px;font-size:10.30px;line-height:12.88px;color:#111;font-weight:normal;white-space:nowrap;-webkit-text-stroke:0.22px currentColor;width:41.40px;text-align:right;transform:scaleX(0.970);transform-origin:100% 0;">2133</div>
<div style="left:1048.60px;top:150.94px;font-size:10.30px;line-height:12.88px;color:#111;font-weight:normal;white-space:nowrap;-webkit-text-stroke:0.22px currentColor;width:43.00px;text-align:right;transform:scaleX(0.970);transform-origin:100% 0;">1547</div>
<div style="left:1094.80px;top:150.94px;font-size:10.30px;line-height:12.88px;color:#111;font-weight:normal;white-space:nowrap;-webkit-text-stroke:0.22px currentColor;width:49.20px;text-align:right;transform:scaleX(0.970);transform-origin:100% 0;">716.15</div>
<div style="left:566.80px;top:167.12px;font-size:10.30px;line-height:12.88px;color:#111;font-weight:normal;white-space:nowrap;-webkit-text-stroke:0.22px currentColor;width:23.20px;text-align:right;transform:scaleX(0.970);transform-origin:100% 0;">5</div>
<div style="left:593.20px;top:167.12px;font-size:10.30px;line-height:12.88px;color:#111;font-weight:normal;white-space:nowrap;-webkit-text-stroke:0.22px currentColor;width:32.80px;text-align:right;transform:scaleX(0.970);transform-origin:100% 0;">2400</div>
<div style="left:663.60px;top:167.12px;font-size:10.30px;line-height:12.88px;color:#111;font-weight:normal;white-space:nowrap;-webkit-text-stroke:0.22px currentColor;width:35.20px;text-align:right;transform:scaleX(0.970);transform-origin:100% 0;">2400</div>
<div style="left:702.00px;top:167.12px;font-size:10.30px;line-height:12.88px;color:#111;font-weight:normal;white-space:nowrap;-webkit-text-stroke:0.22px currentColor;width:39.00px;text-align:right;transform:scaleX(0.970);transform-origin:100% 0;">Vie</div>
<div style="left:744.20px;top:167.12px;font-size:10.30px;line-height:12.88px;color:#111;font-weight:normal;white-space:nowrap;-webkit-text-stroke:0.22px currentColor;width:49.20px;text-align:right;transform:scaleX(0.970);transform-origin:100% 0;">48</div>
<div style="left:796.60px;top:167.12px;font-size:10.30px;line-height:12.88px;color:#111;font-weight:normal;white-space:nowrap;-webkit-text-stroke:0.22px currentColor;width:39.00px;text-align:right;transform:scaleX(0.970);transform-origin:100% 0;">40.49</div>
<div style="left:838.80px;top:167.12px;font-size:10.30px;line-height:12.88px;color:#111;font-weight:normal;white-space:nowrap;-webkit-text-stroke:0.22px currentColor;width:34.60px;text-align:right;transform:scaleX(0.970);transform-origin:100% 0;">1166</div>
<div style="left:876.60px;top:167.12px;font-size:10.30px;line-height:12.88px;color:#111;font-weight:normal;white-space:nowrap;-webkit-text-stroke:0.22px currentColor;width:37.00px;text-align:right;transform:scaleX(0.970);transform-origin:100% 0;">16.00</div>
<div style="left:916.80px;top:167.12px;font-size:10.30px;line-height:12.88px;color:#111;font-weight:normal;white-space:nowrap;-webkit-text-stroke:0.22px currentColor;width:40.80px;text-align:right;transform:scaleX(0.970);transform-origin:100% 0;">388.67</div>
<div style="left:960.80px;top:167.12px;font-size:10.30px;line-height:12.88px;color:#111;font-weight:normal;white-space:nowrap;-webkit-text-stroke:0.22px currentColor;width:40.00px;text-align:right;transform:scaleX(0.970);transform-origin:100% 0;">820</div>
<div style="left:1004.00px;top:167.12px;font-size:10.30px;line-height:12.88px;color:#111;font-weight:normal;white-space:nowrap;-webkit-text-stroke:0.22px currentColor;width:41.40px;text-align:right;transform:scaleX(0.970);transform-origin:100% 0;">1368</div>
<div style="left:1048.60px;top:167.12px;font-size:10.30px;line-height:12.88px;color:#111;font-weight:normal;white-space:nowrap;-webkit-text-stroke:0.22px currentColor;width:43.00px;text-align:right;transform:scaleX(0.970);transform-origin:100% 0;">833</div>
<div style="left:1094.80px;top:167.12px;font-size:10.30px;line-height:12.88px;color:#111;font-weight:normal;white-space:nowrap;-webkit-text-stroke:0.22px currentColor;width:49.20px;text-align:right;transform:scaleX(0.970);transform-origin:100% 0;">174.46</div>
<div style="left:566.80px;top:183.30px;font-size:10.30px;line-height:12.88px;color:#111;font-weight:normal;white-space:nowrap;-webkit-text-stroke:0.22px currentColor;width:23.20px;text-align:right;transform:scaleX(0.970);transform-origin:100% 0;">9</div>
<div style="left:593.20px;top:183.30px;font-size:10.30px;line-height:12.88px;color:#111;font-weight:normal;white-space:nowrap;-webkit-text-stroke:0.22px currentColor;width:32.80px;text-align:right;transform:scaleX(0.970);transform-origin:100% 0;">4320</div>
<div style="left:663.60px;top:183.30px;font-size:10.30px;line-height:12.88px;color:#111;font-weight:normal;white-space:nowrap;-webkit-text-stroke:0.22px currentColor;width:35.20px;text-align:right;transform:scaleX(0.970);transform-origin:100% 0;">4320</div>
<div style="left:702.00px;top:183.30px;font-size:10.30px;line-height:12.88px;color:#111;font-weight:normal;white-space:nowrap;-webkit-text-stroke:0.22px currentColor;width:39.00px;text-align:right;transform:scaleX(0.970);transform-origin:100% 0;">Sáb</div>
<div style="left:744.20px;top:183.30px;font-size:10.30px;line-height:12.88px;color:#111;font-weight:normal;white-space:nowrap;-webkit-text-stroke:0.22px currentColor;width:49.20px;text-align:right;transform:scaleX(0.970);transform-origin:100% 0;">48</div>
<div style="left:796.60px;top:183.30px;font-size:10.30px;line-height:12.88px;color:#111;font-weight:normal;white-space:nowrap;-webkit-text-stroke:0.22px currentColor;width:39.00px;text-align:right;transform:scaleX(0.970);transform-origin:100% 0;">17.26</div>
<div style="left:838.80px;top:183.30px;font-size:10.30px;line-height:12.88px;color:#111;font-weight:normal;white-space:nowrap;-webkit-text-stroke:0.22px currentColor;width:34.60px;text-align:right;transform:scaleX(0.970);transform-origin:100% 0;">497</div>
<div style="left:876.60px;top:183.30px;font-size:10.30px;line-height:12.88px;color:#111;font-weight:normal;white-space:nowrap;-webkit-text-stroke:0.22px currentColor;width:37.00px;text-align:right;transform:scaleX(0.970);transform-origin:100% 0;">16.00</div>
<div style="left:916.80px;top:183.30px;font-size:10.30px;line-height:12.88px;color:#111;font-weight:normal;white-space:nowrap;-webkit-text-stroke:0.22px currentColor;width:40.80px;text-align:right;transform:scaleX(0.970);transform-origin:100% 0;">165.67</div>
<div style="left:960.80px;top:183.30px;font-size:10.30px;line-height:12.88px;color:#111;font-weight:normal;white-space:nowrap;-webkit-text-stroke:0.22px currentColor;width:40.00px;text-align:right;transform:scaleX(0.970);transform-origin:100% 0;">174</div>
<div style="left:1004.00px;top:183.30px;font-size:10.30px;line-height:12.88px;color:#111;font-weight:normal;white-space:nowrap;-webkit-text-stroke:0.22px currentColor;width:41.40px;text-align:right;transform:scaleX(0.970);transform-origin:100% 0;">1480</div>
<div style="left:1048.60px;top:183.30px;font-size:10.30px;line-height:12.88px;color:#111;font-weight:normal;white-space:nowrap;-webkit-text-stroke:0.22px currentColor;width:43.00px;text-align:right;transform:scaleX(0.970);transform-origin:100% 0;">396</div>
<div style="left:1094.80px;top:183.30px;font-size:10.30px;line-height:12.88px;color:#111;font-weight:normal;white-space:nowrap;-webkit-text-stroke:0.22px currentColor;width:49.20px;text-align:right;transform:scaleX(0.970);transform-origin:100% 0;">58.96</div>
<div style="left:566.80px;top:199.48px;font-size:10.30px;line-height:12.88px;color:#111;font-weight:normal;white-space:nowrap;-webkit-text-stroke:0.22px currentColor;width:23.20px;text-align:right;transform:scaleX(0.970);transform-origin:100% 0;">2</div>
<div style="left:593.20px;top:199.48px;font-size:10.30px;line-height:12.88px;color:#111;font-weight:normal;white-space:nowrap;-webkit-text-stroke:0.22px currentColor;width:32.80px;text-align:right;transform:scaleX(0.970);transform-origin:100% 0;">960</div>
<div style="left:663.60px;top:199.48px;font-size:10.30px;line-height:12.88px;color:#111;font-weight:normal;white-space:nowrap;-webkit-text-stroke:0.22px currentColor;width:35.20px;text-align:right;transform:scaleX(0.970);transform-origin:100% 0;">960</div>
<div style="left:702.00px;top:199.48px;font-size:10.30px;line-height:12.88px;color:#111;font-weight:normal;white-space:nowrap;-webkit-text-stroke:0.22px currentColor;width:39.00px;text-align:right;transform:scaleX(0.970);transform-origin:100% 0;">Dom</div>
<div style="left:744.20px;top:199.48px;font-size:10.30px;line-height:12.88px;color:#111;font-weight:normal;white-space:nowrap;-webkit-text-stroke:0.22px currentColor;width:49.20px;text-align:right;transform:scaleX(0.970);transform-origin:100% 0;">56</div>
<div style="left:796.60px;top:199.48px;font-size:10.30px;line-height:12.88px;color:#111;font-weight:normal;white-space:nowrap;-webkit-text-stroke:0.22px currentColor;width:39.00px;text-align:right;transform:scaleX(0.970);transform-origin:100% 0;">12.02</div>
<div style="left:838.80px;top:199.48px;font-size:10.30px;line-height:12.88px;color:#111;font-weight:normal;white-space:nowrap;-webkit-text-stroke:0.22px currentColor;width:34.60px;text-align:right;transform:scaleX(0.970);transform-origin:100% 0;">404</div>
<div style="left:876.60px;top:199.48px;font-size:10.30px;line-height:12.88px;color:#111;font-weight:normal;white-space:nowrap;-webkit-text-stroke:0.22px currentColor;width:37.00px;text-align:right;transform:scaleX(0.970);transform-origin:100% 0;">18.67</div>
<div style="left:916.80px;top:199.48px;font-size:10.30px;line-height:12.88px;color:#111;font-weight:normal;white-space:nowrap;-webkit-text-stroke:0.22px currentColor;width:40.80px;text-align:right;transform:scaleX(0.970);transform-origin:100% 0;">134.67</div>
<div style="left:960.80px;top:199.48px;font-size:10.30px;line-height:12.88px;color:#111;font-weight:normal;white-space:nowrap;-webkit-text-stroke:0.22px currentColor;width:40.00px;text-align:right;transform:scaleX(0.970);transform-origin:100% 0;">1088</div>
<div style="left:1004.00px;top:199.48px;font-size:10.30px;line-height:12.88px;color:#111;font-weight:normal;white-space:nowrap;-webkit-text-stroke:0.22px currentColor;width:41.40px;text-align:right;transform:scaleX(0.970);transform-origin:100% 0;">695</div>
<div style="left:1048.60px;top:199.48px;font-size:10.30px;line-height:12.88px;color:#111;font-weight:normal;white-space:nowrap;-webkit-text-stroke:0.22px currentColor;width:43.00px;text-align:right;transform:scaleX(0.970);transform-origin:100% 0;">261</div>
<div style="left:1094.80px;top:199.48px;font-size:10.30px;line-height:12.88px;color:#111;font-weight:normal;white-space:nowrap;-webkit-text-stroke:0.22px currentColor;width:49.20px;text-align:right;transform:scaleX(0.970);transform-origin:100% 0;">255.00</div>
<div style="left:566.80px;top:215.66px;font-size:10.30px;line-height:12.88px;color:#111;font-weight:normal;white-space:nowrap;-webkit-text-stroke:0.22px currentColor;width:23.20px;text-align:right;transform:scaleX(0.970);transform-origin:100% 0;">27</div>
<div style="left:593.20px;top:215.66px;font-size:10.30px;line-height:12.88px;color:#111;font-weight:normal;white-space:nowrap;-webkit-text-stroke:0.22px currentColor;width:32.80px;text-align:right;transform:scaleX(0.970);transform-origin:100% 0;">12960</div>
<div style="left:629.20px;top:215.66px;font-size:10.30px;line-height:12.88px;color:#111;font-weight:normal;white-space:nowrap;-webkit-text-stroke:0.22px currentColor;width:31.20px;text-align:right;transform:scaleX(0.970);transform-origin:100% 0;">0</div>
<div style="left:663.60px;top:215.66px;font-size:10.30px;line-height:12.88px;color:#111;font-weight:normal;white-space:nowrap;-webkit-text-stroke:0.22px currentColor;width:35.20px;text-align:right;transform:scaleX(0.970);transform-origin:100% 0;">12960</div>
<div style="left:744.20px;top:215.66px;font-size:10.30px;line-height:12.88px;color:#111;font-weight:normal;white-space:nowrap;-webkit-text-stroke:0.22px currentColor;width:49.20px;text-align:right;transform:scaleX(0.970);transform-origin:100% 0;">380</div>
<div style="left:796.60px;top:215.66px;font-size:10.30px;line-height:12.88px;color:#111;font-weight:normal;white-space:nowrap;-webkit-text-stroke:0.22px currentColor;width:39.00px;text-align:right;transform:scaleX(0.970);transform-origin:100% 0;">23.36</div>
<div style="left:838.80px;top:215.66px;font-size:10.30px;line-height:12.88px;color:#111;font-weight:normal;white-space:nowrap;-webkit-text-stroke:0.22px currentColor;width:34.60px;text-align:right;transform:scaleX(0.970);transform-origin:100% 0;">5621</div>
<div style="left:876.60px;top:215.66px;font-size:10.30px;line-height:12.88px;color:#111;font-weight:normal;white-space:nowrap;-webkit-text-stroke:0.22px currentColor;width:37.00px;text-align:right;transform:scaleX(0.970);transform-origin:100% 0;">14.87</div>
<div style="left:916.80px;top:215.66px;font-size:10.30px;line-height:12.88px;color:#111;font-weight:normal;white-space:nowrap;-webkit-text-stroke:0.22px currentColor;width:40.80px;text-align:right;transform:scaleX(0.970);transform-origin:100% 0;">1471.41</div>
<div style="left:960.80px;top:215.66px;font-size:10.30px;line-height:12.88px;color:#111;font-weight:normal;white-space:nowrap;-webkit-text-stroke:0.22px currentColor;width:40.00px;text-align:right;transform:scaleX(0.970);transform-origin:100% 0;">4181</div>
<div style="left:1004.00px;top:215.66px;font-size:10.30px;line-height:12.88px;color:#111;font-weight:normal;white-space:nowrap;-webkit-text-stroke:0.22px currentColor;width:41.40px;text-align:right;transform:scaleX(0.970);transform-origin:100% 0;">6276</div>
<div style="left:1048.60px;top:215.66px;font-size:10.30px;line-height:12.88px;color:#111;font-weight:normal;white-space:nowrap;-webkit-text-stroke:0.22px currentColor;width:43.00px;text-align:right;transform:scaleX(0.970);transform-origin:100% 0;">5017</div>
<div style="left:1094.80px;top:215.66px;font-size:10.30px;line-height:12.88px;color:#111;font-weight:normal;white-space:nowrap;-webkit-text-stroke:0.22px currentColor;width:49.20px;text-align:right;transform:scaleX(0.970);transform-origin:100% 0;">222.06</div>
<div style="left:566.80px;top:100.60px;width:580.40px;height:1.00px;background:#dcdcdc"></div>
<div style="left:566.80px;top:116.78px;width:580.40px;height:1.00px;background:#dcdcdc"></div>
<div style="left:566.80px;top:132.96px;width:580.40px;height:1.00px;background:#dcdcdc"></div>
<div style="left:566.80px;top:149.14px;width:580.40px;height:1.00px;background:#dcdcdc"></div>
<div style="left:566.80px;top:165.32px;width:580.40px;height:1.00px;background:#dcdcdc"></div>
<div style="left:566.80px;top:181.50px;width:580.40px;height:1.00px;background:#dcdcdc"></div>
<div style="left:566.80px;top:197.68px;width:580.40px;height:1.00px;background:#dcdcdc"></div>
<div style="left:566.80px;top:213.86px;width:580.40px;height:1.00px;background:#dcdcdc"></div>
<div style="left:566.80px;top:230.04px;width:580.40px;height:1.00px;background:#dcdcdc"></div>
<div style="left:593.20px;top:72.80px;width:1.00px;height:157.24px;background:#dcdcdc"></div>
<div style="left:629.20px;top:72.80px;width:1.00px;height:157.24px;background:#dcdcdc"></div>
<div style="left:663.60px;top:72.80px;width:1.00px;height:157.24px;background:#dcdcdc"></div>
<div style="left:702.00px;top:72.80px;width:1.00px;height:157.24px;background:#dcdcdc"></div>
<div style="left:744.20px;top:72.80px;width:1.00px;height:157.24px;background:#dcdcdc"></div>
<div style="left:796.60px;top:72.80px;width:1.00px;height:157.24px;background:#dcdcdc"></div>
<div style="left:838.80px;top:72.80px;width:1.00px;height:157.24px;background:#dcdcdc"></div>
<div style="left:876.60px;top:72.80px;width:1.00px;height:157.24px;background:#dcdcdc"></div>
<div style="left:916.80px;top:72.80px;width:1.00px;height:157.24px;background:#dcdcdc"></div>
<div style="left:960.80px;top:72.80px;width:1.00px;height:157.24px;background:#dcdcdc"></div>
<div style="left:1004.00px;top:72.80px;width:1.00px;height:157.24px;background:#dcdcdc"></div>
<div style="left:1048.60px;top:72.80px;width:1.00px;height:157.24px;background:#dcdcdc"></div>
<div style="left:1094.80px;top:72.80px;width:1.00px;height:157.24px;background:#dcdcdc"></div>
<div style="left:1147.20px;top:72.80px;width:1.00px;height:157.24px;background:#dcdcdc"></div>
<div  style="left:563.80px;top:260.00px;width:154.40px;height:149.80px;border-style:solid;border-width:2.0px;border-color:#4d4d4d #5a5a5a #555 #8a8a8a;background:#fff"></div>
<svg style="left:0;top:0" width="10" height="10"><path d="M640.40 334.40 L640.40 265.80 A68.60 68.60 0 0 1 704.01 308.70 Z" fill="#808080"/><path d="M640.40 334.40 L704.01 308.70 A68.60 68.60 0 0 1 700.64 367.22 Z" fill="#dcdcdc"/><path d="M640.40 334.40 L700.64 367.22 A68.60 68.60 0 0 1 641.27 402.99 Z" fill="#4682b4"/><path d="M640.40 334.40 L641.27 402.99 A68.60 68.60 0 0 1 574.08 351.93 Z" fill="#9acd32"/><path d="M640.40 334.40 L574.08 351.93 A68.60 68.60 0 0 1 640.40 265.80 Z" fill="#ffa500"/></svg>
<div style="left:723.40px;top:261.78px;font-size:13.20px;line-height:16.50px;color:#1f4a9c;font-weight:bold;white-space:nowrap;-webkit-text-stroke:0.22px currentColor;transform:scaleX(1.081);transform-origin:0 0;">Tiempo por Origen de Actividad</div>
<div  style="left:721.80px;top:279.40px;width:271.60px;height:130.40px;border-style:solid;border-width:2.0px;border-color:#666 #5a5a5a #555 #777;background:#fff"></div>
<div  style="left:723.20px;top:280.60px;width:268.00px;height:18.20px;background:linear-gradient(#cddaeb,#b6c8df)"></div>
<div style="left:745.00px;top:282.75px;font-size:12.00px;line-height:15.00px;color:#111;font-weight:normal;white-space:nowrap;-webkit-text-stroke:0.22px currentColor;">Concepto</div>
<div style="left:848.80px;top:282.75px;font-size:12.00px;line-height:15.00px;color:#111;font-weight:normal;white-space:nowrap;-webkit-text-stroke:0.22px currentColor;width:72.80px;text-align:right;">Minutos</div>
<div style="left:924.80px;top:282.75px;font-size:12.00px;line-height:15.00px;color:#111;font-weight:normal;white-space:nowrap;-webkit-text-stroke:0.22px currentColor;width:60.80px;text-align:right;transform:scaleX(1.100);transform-origin:100% 0;">%</div>
<div  style="left:723.20px;top:299.40px;width:17.80px;height:17.40px;background:#808080"></div>
<div style="left:745.00px;top:300.95px;font-size:12.00px;line-height:15.00px;color:#111;font-weight:normal;white-space:nowrap;-webkit-text-stroke:0.22px currentColor;transform:scaleX(0.960);transform-origin:0 0;">Fallas</div>
<div style="left:848.80px;top:300.95px;font-size:12.00px;line-height:15.00px;color:#111;font-weight:normal;white-space:nowrap;-webkit-text-stroke:0.22px currentColor;width:72.40px;text-align:right;transform:scaleX(0.980);transform-origin:100% 0;">5621</div>
<div style="left:924.80px;top:300.95px;font-size:12.00px;line-height:15.00px;color:#111;font-weight:normal;white-space:nowrap;-webkit-text-stroke:0.22px currentColor;width:60.80px;text-align:right;transform:scaleX(1.070);transform-origin:100% 0;">18.89 %</div>
<div style="left:723.20px;top:298.80px;width:268.00px;height:1.00px;background:#b8bec8"></div>
<div  style="left:723.20px;top:317.40px;width:17.80px;height:17.40px;background:#dcdcdc"></div>
<div style="left:745.00px;top:318.95px;font-size:12.00px;line-height:15.00px;color:#111;font-weight:normal;white-space:nowrap;-webkit-text-stroke:0.22px currentColor;transform:scaleX(0.960);transform-origin:0 0;">Ajustes</div>
<div style="left:848.80px;top:318.95px;font-size:12.00px;line-height:15.00px;color:#111;font-weight:normal;white-space:nowrap;-webkit-text-stroke:0.22px currentColor;width:72.40px;text-align:right;transform:scaleX(0.980);transform-origin:100% 0;">4181</div>
<div style="left:924.80px;top:318.95px;font-size:12.00px;line-height:15.00px;color:#111;font-weight:normal;white-space:nowrap;-webkit-text-stroke:0.22px currentColor;width:60.80px;text-align:right;transform:scaleX(1.070);transform-origin:100% 0;">14.05 %</div>
<div style="left:723.20px;top:316.80px;width:268.00px;height:1.00px;background:#b8bec8"></div>
<div  style="left:723.20px;top:335.40px;width:17.80px;height:17.40px;background:#4682b4"></div>
<div style="left:745.00px;top:336.95px;font-size:12.00px;line-height:15.00px;color:#111;font-weight:normal;white-space:nowrap;-webkit-text-stroke:0.22px currentColor;transform:scaleX(0.960);transform-origin:0 0;">Limpiezas</div>
<div style="left:848.80px;top:336.95px;font-size:12.00px;line-height:15.00px;color:#111;font-weight:normal;white-space:nowrap;-webkit-text-stroke:0.22px currentColor;width:72.40px;text-align:right;transform:scaleX(0.980);transform-origin:100% 0;">5017</div>
<div style="left:924.80px;top:336.95px;font-size:12.00px;line-height:15.00px;color:#111;font-weight:normal;white-space:nowrap;-webkit-text-stroke:0.22px currentColor;width:60.80px;text-align:right;transform:scaleX(1.070);transform-origin:100% 0;">16.86 %</div>
<div style="left:723.20px;top:334.80px;width:268.00px;height:1.00px;background:#b8bec8"></div>
<div  style="left:723.20px;top:353.40px;width:17.80px;height:17.40px;background:#9acd32"></div>
<div style="left:745.00px;top:354.95px;font-size:12.00px;line-height:15.00px;color:#111;font-weight:normal;white-space:nowrap;-webkit-text-stroke:0.22px currentColor;transform:scaleX(0.960);transform-origin:0 0;">Mejoras</div>
<div style="left:848.80px;top:354.95px;font-size:12.00px;line-height:15.00px;color:#111;font-weight:normal;white-space:nowrap;-webkit-text-stroke:0.22px currentColor;width:72.40px;text-align:right;transform:scaleX(0.980);transform-origin:100% 0;">6276</div>
<div style="left:924.80px;top:354.95px;font-size:12.00px;line-height:15.00px;color:#111;font-weight:normal;white-space:nowrap;-webkit-text-stroke:0.22px currentColor;width:60.80px;text-align:right;transform:scaleX(1.070);transform-origin:100% 0;">21.09 %</div>
<div style="left:723.20px;top:352.80px;width:268.00px;height:1.00px;background:#b8bec8"></div>
<div  style="left:723.20px;top:371.40px;width:17.80px;height:17.40px;background:#ffa500"></div>
<div style="left:745.00px;top:372.95px;font-size:12.00px;line-height:15.00px;color:#111;font-weight:normal;white-space:nowrap;-webkit-text-stroke:0.22px currentColor;transform:scaleX(0.960);transform-origin:0 0;">MPs</div>
<div style="left:848.80px;top:372.95px;font-size:12.00px;line-height:15.00px;color:#111;font-weight:normal;white-space:nowrap;-webkit-text-stroke:0.22px currentColor;width:72.40px;text-align:right;transform:scaleX(0.980);transform-origin:100% 0;">8663</div>
<div style="left:924.80px;top:372.95px;font-size:12.00px;line-height:15.00px;color:#111;font-weight:normal;white-space:nowrap;-webkit-text-stroke:0.22px currentColor;width:60.80px;text-align:right;transform:scaleX(1.070);transform-origin:100% 0;">29.11 %</div>
<div style="left:723.20px;top:370.80px;width:268.00px;height:1.00px;background:#b8bec8"></div>
<div style="left:745.00px;top:390.95px;font-size:12.00px;line-height:15.00px;color:#111;font-weight:normal;white-space:nowrap;-webkit-text-stroke:0.22px currentColor;transform:scaleX(0.960);transform-origin:0 0;">Total</div>
<div style="left:848.80px;top:390.95px;font-size:12.00px;line-height:15.00px;color:#111;font-weight:normal;white-space:nowrap;-webkit-text-stroke:0.22px currentColor;width:72.40px;text-align:right;transform:scaleX(0.980);transform-origin:100% 0;">29758</div>
<div style="left:723.20px;top:388.80px;width:268.00px;height:1.00px;background:#b8bec8"></div>
<div style="left:741.00px;top:280.60px;width:1.00px;height:128.00px;background:#b8bec8"></div>
<div style="left:848.80px;top:280.60px;width:1.00px;height:128.00px;background:#b8bec8"></div>
<div style="left:924.80px;top:280.60px;width:1.00px;height:128.00px;background:#b8bec8"></div>
<div  style="left:1017.20px;top:272.80px;width:149.20px;height:22.60px;background:linear-gradient(#e2ebf6,#d5e1f1);border:0.5px solid #cfdcec"></div>
<div style="left:1017.20px;top:277.32px;font-size:11.00px;line-height:13.75px;color:#111;font-weight:normal;white-space:nowrap;-webkit-text-stroke:0.22px currentColor;width:149.20px;text-align:center;transform:scaleX(1.160);transform-origin:50% 0;"><u>R</u>efacciones Faltantes</div>
<div style="left:565.60px;top:411.77px;font-size:12.80px;line-height:16.00px;color:#1f3f80;font-weight:bold;white-space:nowrap;-webkit-text-stroke:0.22px currentColor;transform:scaleX(0.980);transform-origin:0 0;">Máquinas</div>
<div  style="left:564.00px;top:428.20px;width:607.80px;height:108.80px;border-style:solid;border-width:2.0px;border-color:#4d4d4d #5a5a5a #666 #8a8a8a;background:#fff"></div>
<svg style="left:0;top:0" width="10" height="10"><path d="M603.20 447.00 L603.20 518.40 L1149.20 518.40" stroke="#505050" stroke-width="2.0" fill="none"/><path d="M603.20 448.80 L862.80 506.80 L1122.00 517.00" stroke="#4a4aff" stroke-width="2.0" fill="none"/><circle cx="603.20" cy="448.80" r="2.7" fill="#f00"/><circle cx="862.80" cy="506.80" r="2.7" fill="#f00"/><circle cx="1122.00" cy="517.00" r="2.7" fill="#f00"/></svg>
<div style="left:561.80px;top:451.90px;font-size:10.20px;line-height:12.75px;color:#000;font-weight:normal;white-space:nowrap;-webkit-text-stroke:0.22px currentColor;width:40.00px;text-align:right;transform:scaleX(0.930);transform-origin:100% 0;">4000</div>
<div style="left:561.80px;top:482.30px;font-size:10.20px;line-height:12.75px;color:#000;font-weight:normal;white-space:nowrap;-webkit-text-stroke:0.22px currentColor;width:40.00px;text-align:right;transform:scaleX(0.930);transform-origin:100% 0;">2000</div>
<div style="left:561.80px;top:511.10px;font-size:10.20px;line-height:12.75px;color:#000;font-weight:normal;white-space:nowrap;-webkit-text-stroke:0.22px currentColor;width:40.00px;text-align:right;transform:scaleX(0.930);transform-origin:100% 0;">0</div>
<div style="left:580.80px;top:519.32px;font-size:11.00px;line-height:13.75px;color:#3030ff;font-weight:normal;white-space:nowrap;-webkit-text-stroke:0.3px currentColor;width:40.00px;text-align:center;transform:scaleX(1.060);transform-origin:50% 0;">ATR1</div>
<div style="left:842.60px;top:519.32px;font-size:11.00px;line-height:13.75px;color:#3030ff;font-weight:normal;white-space:nowrap;-webkit-text-stroke:0.3px currentColor;width:40.00px;text-align:center;transform:scaleX(1.060);transform-origin:50% 0;">ATR2</div>
<div style="left:1102.60px;top:519.32px;font-size:11.00px;line-height:13.75px;color:#3030ff;font-weight:normal;white-space:nowrap;-webkit-text-stroke:0.3px currentColor;width:40.00px;text-align:center;transform:scaleX(1.060);transform-origin:50% 0;">LSR1</div>
<div style="left:603.20px;top:435.12px;font-size:11.00px;line-height:13.75px;color:#000;font-weight:normal;white-space:nowrap;-webkit-text-stroke:0.25px currentColor;transform:scaleX(0.880);transform-origin:0 0;">4602</div>
<div style="left:862.80px;top:492.32px;font-size:11.00px;line-height:13.75px;color:#000;font-weight:normal;white-space:nowrap;-webkit-text-stroke:0.25px currentColor;transform:scaleX(0.880);transform-origin:0 0;">835</div>
<div style="left:1122.40px;top:503.52px;font-size:11.00px;line-height:13.75px;color:#000;font-weight:normal;white-space:nowrap;-webkit-text-stroke:0.25px currentColor;transform:scaleX(0.880);transform-origin:0 0;">184</div>
<div style="left:565.60px;top:538.17px;font-size:12.80px;line-height:16.00px;color:#1f3f80;font-weight:bold;white-space:nowrap;-webkit-text-stroke:0.22px currentColor;transform:scaleX(0.988);transform-origin:0 0;">Estaciones de Máquina ATR1: Autotrack 1</div>
<div  style="left:564.00px;top:554.00px;width:607.80px;height:108.60px;border-style:solid;border-width:2.0px;border-color:#4d4d4d #5a5a5a #666 #8a8a8a;background:#fff"></div>
<svg style="left:0;top:0" width="10" height="10"><path d="M603.20 560.40 L603.20 644.20 L1149.20 644.20" stroke="#505050" stroke-width="2.0" fill="none"/><path d="M603.20 574.60 L862.60 583.60 L1122.00 583.60" stroke="#4a4aff" stroke-width="2.0" fill="none"/><circle cx="603.20" cy="574.60" r="2.7" fill="#f00"/><circle cx="862.60" cy="583.60" r="2.7" fill="#f00"/><circle cx="1122.00" cy="583.60" r="2.7" fill="#f00"/></svg>
<div style="left:561.80px;top:554.70px;font-size:10.20px;line-height:12.75px;color:#000;font-weight:normal;white-space:nowrap;-webkit-text-stroke:0.22px currentColor;width:40.00px;text-align:right;transform:scaleX(0.930);transform-origin:100% 0;">2000</div>
<div style="left:561.80px;top:574.90px;font-size:10.20px;line-height:12.75px;color:#000;font-weight:normal;white-space:nowrap;-webkit-text-stroke:0.22px currentColor;width:40.00px;text-align:right;transform:scaleX(0.930);transform-origin:100% 0;">1500</div>
<div style="left:561.80px;top:596.30px;font-size:10.20px;line-height:12.75px;color:#000;font-weight:normal;white-space:nowrap;-webkit-text-stroke:0.22px currentColor;width:40.00px;text-align:right;transform:scaleX(0.930);transform-origin:100% 0;">1000</div>
<div style="left:561.80px;top:617.10px;font-size:10.20px;line-height:12.75px;color:#000;font-weight:normal;white-space:nowrap;-webkit-text-stroke:0.22px currentColor;width:40.00px;text-align:right;transform:scaleX(0.930);transform-origin:100% 0;">500</div>
<div style="left:561.80px;top:636.70px;font-size:10.20px;line-height:12.75px;color:#000;font-weight:normal;white-space:nowrap;-webkit-text-stroke:0.22px currentColor;width:40.00px;text-align:right;transform:scaleX(0.930);transform-origin:100% 0;">0</div>
<div style="left:583.00px;top:644.92px;font-size:11.00px;line-height:13.75px;color:#3030ff;font-weight:normal;white-space:nowrap;-webkit-text-stroke:0.3px currentColor;width:40.00px;text-align:center;transform:scaleX(1.060);transform-origin:50% 0;">300</div>
<div style="left:842.60px;top:644.92px;font-size:11.00px;line-height:13.75px;color:#3030ff;font-weight:normal;white-space:nowrap;-webkit-text-stroke:0.3px currentColor;width:40.00px;text-align:center;transform:scaleX(1.060);transform-origin:50% 0;">100</div>
<div style="left:1102.60px;top:644.92px;font-size:11.00px;line-height:13.75px;color:#3030ff;font-weight:normal;white-space:nowrap;-webkit-text-stroke:0.3px currentColor;width:40.00px;text-align:center;transform:scaleX(1.060);transform-origin:50% 0;">200</div>
<div style="left:604.00px;top:561.12px;font-size:11.00px;line-height:13.75px;color:#000;font-weight:normal;white-space:nowrap;-webkit-text-stroke:0.25px currentColor;transform:scaleX(0.880);transform-origin:0 0;">1678</div>
<div style="left:863.20px;top:570.12px;font-size:11.00px;line-height:13.75px;color:#000;font-weight:normal;white-space:nowrap;-webkit-text-stroke:0.25px currentColor;transform:scaleX(0.880);transform-origin:0 0;">1467</div>
<div style="left:1122.80px;top:570.12px;font-size:11.00px;line-height:13.75px;color:#000;font-weight:normal;white-space:nowrap;-webkit-text-stroke:0.25px currentColor;transform:scaleX(0.880);transform-origin:0 0;">1467</div>
<div style="left:565.60px;top:663.37px;font-size:12.80px;line-height:16.00px;color:#1f3f80;font-weight:bold;white-space:nowrap;-webkit-text-stroke:0.22px currentColor;transform:scaleX(0.984);transform-origin:0 0;">Conceptos de Estación 100: Inicio</div>
<div  style="left:564.00px;top:678.00px;width:245.20px;height:109.60px;border-style:solid;border-width:2.0px;border-color:#4d4d4d #777 #555 #8a8a8a;background:#fff"></div>
<div  style="left:566.00px;top:681.60px;width:221.60px;height:16.00px;background:#e4e9ef"></div>
<div style="left:569.60px;top:681.75px;font-size:12.00px;line-height:15.00px;color:#111;font-weight:normal;white-space:nowrap;-webkit-text-stroke:0.22px currentColor;transform:scaleX(0.981);transform-origin:0 0;">Clave</div>
<div style="left:638.00px;top:681.75px;font-size:12.00px;line-height:15.00px;color:#111;font-weight:normal;white-space:nowrap;-webkit-text-stroke:0.22px currentColor;transform:scaleX(0.961);transform-origin:0 0;">Nombre</div>
<div style="left:569.60px;top:700.15px;font-size:12.00px;line-height:15.00px;color:#111;font-weight:normal;white-space:nowrap;-webkit-text-stroke:0.22px currentColor;transform:scaleX(0.951);transform-origin:0 0;">456</div>
<div style="left:638.00px;top:700.15px;font-size:12.00px;line-height:15.00px;color:#111;font-weight:normal;white-space:nowrap;-webkit-text-stroke:0.22px currentColor;transform:scaleX(1.001);transform-origin:0 0;">Falla 002</div>
<div style="left:569.60px;top:719.15px;font-size:12.00px;line-height:15.00px;color:#111;font-weight:normal;white-space:nowrap;-webkit-text-stroke:0.22px currentColor;transform:scaleX(0.951);transform-origin:0 0;">123</div>
<div style="left:638.00px;top:719.15px;font-size:12.00px;line-height:15.00px;color:#111;font-weight:normal;white-space:nowrap;-webkit-text-stroke:0.22px currentColor;transform:scaleX(0.992);transform-origin:0 0;">Falla 001</div>
<div style="left:566.00px;top:716.40px;width:221.60px;height:1.00px;background:#ccc"></div>
<div style="left:566.00px;top:735.20px;width:221.60px;height:1.00px;background:#ccc"></div>
<div style="left:787.60px;top:681.60px;width:1.00px;height:52.80px;background:#ddd"></div>
<div  style="left:807.20px;top:678.00px;width:364.60px;height:109.60px;border-style:solid;border-width:2.0px;border-color:#4d4d4d #5a5a5a #666 #8a8a8a;background:#fff"></div>
<svg style="left:0;top:0" width="10" height="10"><path d="M841.60 694.00 L841.60 770.00 L1157.20 770.00" stroke="#505050" stroke-width="2.0" fill="none"/><path d="M841.60 699.00 L1130.00 709.20" stroke="#4a4aff" stroke-width="2.0" fill="none"/><circle cx="841.60" cy="699.00" r="2.7" fill="#f00"/><circle cx="1130.00" cy="709.20" r="2.7" fill="#f00"/></svg>
<div style="left:800.20px;top:691.90px;font-size:10.20px;line-height:12.75px;color:#000;font-weight:normal;white-space:nowrap;-webkit-text-stroke:0.22px currentColor;width:40.00px;text-align:right;transform:scaleX(0.930);transform-origin:100% 0;">800</div>
<div style="left:800.20px;top:709.90px;font-size:10.20px;line-height:12.75px;color:#000;font-weight:normal;white-space:nowrap;-webkit-text-stroke:0.22px currentColor;width:40.00px;text-align:right;transform:scaleX(0.930);transform-origin:100% 0;">600</div>
<div style="left:800.20px;top:727.90px;font-size:10.20px;line-height:12.75px;color:#000;font-weight:normal;white-space:nowrap;-webkit-text-stroke:0.22px currentColor;width:40.00px;text-align:right;transform:scaleX(0.930);transform-origin:100% 0;">400</div>
<div style="left:800.20px;top:745.90px;font-size:10.20px;line-height:12.75px;color:#000;font-weight:normal;white-space:nowrap;-webkit-text-stroke:0.22px currentColor;width:40.00px;text-align:right;transform:scaleX(0.930);transform-origin:100% 0;">200</div>
<div style="left:820.80px;top:769.72px;font-size:11.00px;line-height:13.75px;color:#3030ff;font-weight:normal;white-space:nowrap;-webkit-text-stroke:0.3px currentColor;width:40.00px;text-align:center;transform:scaleX(1.060);transform-origin:50% 0;">456</div>
<div style="left:1108.80px;top:769.72px;font-size:11.00px;line-height:13.75px;color:#3030ff;font-weight:normal;white-space:nowrap;-webkit-text-stroke:0.3px currentColor;width:40.00px;text-align:center;transform:scaleX(1.060);transform-origin:50% 0;">123</div>
<div style="left:842.40px;top:686.32px;font-size:11.00px;line-height:13.75px;color:#000;font-weight:normal;white-space:nowrap;-webkit-text-stroke:0.25px currentColor;transform:scaleX(0.880);transform-origin:0 0;">790</div>
<div style="left:1129.60px;top:696.32px;font-size:11.00px;line-height:13.75px;color:#000;font-weight:normal;white-space:nowrap;-webkit-text-stroke:0.25px currentColor;transform:scaleX(0.880);transform-origin:0 0;">677</div>
<div style="left:807.20px;top:678.00px;width:2.20px;height:109.60px;background:#555"></div>
</div></body></html>
